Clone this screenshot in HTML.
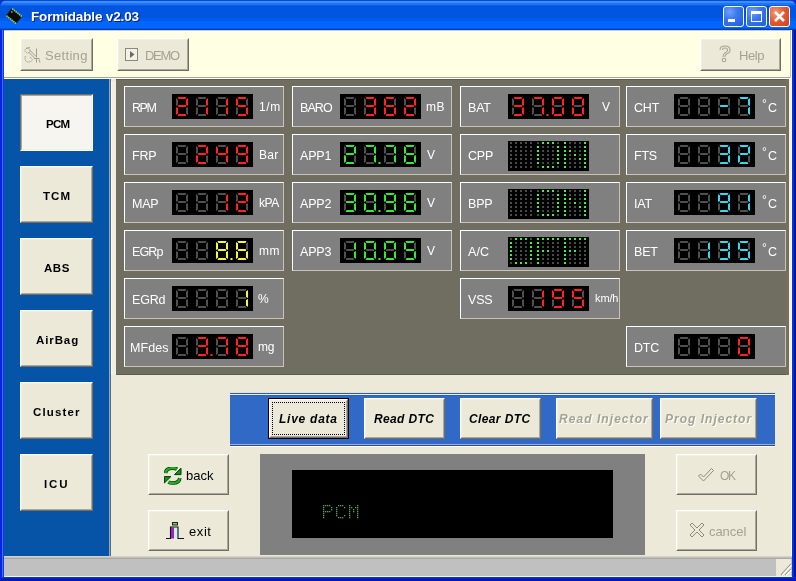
<!DOCTYPE html><html><head><meta charset="utf-8"><style>html,body{margin:0;padding:0;width:796px;height:581px;overflow:hidden;background:#0831D9}body{position:relative;font-family:"Liberation Sans", sans-serif}div,svg{position:absolute}.t{will-change:transform}</style></head><body>
<div style="position:absolute;left:0px;top:0px;width:796px;height:581px;background:#0A2CC8"></div>
<div style="position:absolute;left:0px;top:0px;width:796px;height:30px;background:linear-gradient(to bottom,#0A48D8 0px,#0A48D8 1px,#3B8EFF 1px,#3B8EFF 3px,#1E74F5 3px,#1E74F5 5px,#0A5FE5 5px,#0A5FE5 6px,#0055E0 6px,#0055E0 18px,#005CEB 18px,#005CEB 21px,#0066FF 21px,#0066FF 28px,#0056E0 28px,#0056E0 29px,#0040B0 29px,#0040B0 30px);border-radius:7px 7px 0 0"></div>
<div style="position:absolute;left:0px;top:30px;width:4px;height:551px;background:linear-gradient(to right,#0A24E0 0,#0A24E0 2px,#3A72FF 2px,#3A72FF 3px,#0A40E0 3px)"></div>
<div style="position:absolute;left:792px;top:30px;width:4px;height:551px;background:linear-gradient(to right,#0035E0 0,#0035E0 2px,#00139F 2px)"></div>
<div style="position:absolute;left:0px;top:577px;width:796px;height:4px;background:linear-gradient(to bottom,#0A30E0 0,#0A30E0 1px,#0020C8 1px,#0018B0 4px)"></div>
<div style="position:absolute;left:4px;top:30px;width:788px;height:547px;background:#ECE9D8"></div>
<svg width="20" height="20" style="left:3.6px;top:5.5px" viewBox="0 0 20 20"><g transform="rotate(39 10 10)"><rect x="3.5" y="6" width="13" height="8" fill="#0C0C0C" stroke="#2A3A10" stroke-width="0.6"/><rect x="4" y="4.6" width="1.4" height="1.6" fill="#A8D040"/><rect x="4" y="13.8" width="1.4" height="1.6" fill="#A8D040"/><rect x="6.2" y="4.6" width="1.4" height="1.6" fill="#A8D040"/><rect x="6.2" y="13.8" width="1.4" height="1.6" fill="#A8D040"/><rect x="8.4" y="4.6" width="1.4" height="1.6" fill="#A8D040"/><rect x="8.4" y="13.8" width="1.4" height="1.6" fill="#A8D040"/><rect x="10.6" y="4.6" width="1.4" height="1.6" fill="#A8D040"/><rect x="10.6" y="13.8" width="1.4" height="1.6" fill="#A8D040"/><rect x="12.8" y="4.6" width="1.4" height="1.6" fill="#A8D040"/><rect x="12.8" y="13.8" width="1.4" height="1.6" fill="#A8D040"/><rect x="15" y="4.6" width="1.4" height="1.6" fill="#A8D040"/><rect x="15" y="13.8" width="1.4" height="1.6" fill="#A8D040"/><circle cx="5.8" cy="8.2" r="1" fill="#8A8070"/></g></svg>
<div class="t" style="position:absolute;left:31px;top:10px;white-space:nowrap;font-size:13.5px;line-height:13.5px;color:#fff;letter-spacing:-0.150px;font-weight:bold;text-shadow:1px 1px 0 #0A1F7A">Formidable v2.03</div>
<div style="left:723px;top:6px;width:21px;height:21px;box-sizing:border-box;border:1px solid #fff;border-radius:3px;background:radial-gradient(circle at 30% 25%,#6FA0FF 0,#3A78F0 40%,#2458D8 100%)">
<div style="left:4px;top:12px;width:7px;height:3px;background:#fff"></div>
</div>
<div style="left:746px;top:6px;width:21px;height:21px;box-sizing:border-box;border:1px solid #fff;border-radius:3px;background:radial-gradient(circle at 30% 25%,#6FA0FF 0,#3A78F0 40%,#2458D8 100%)">
<div style="left:4px;top:4px;width:11px;height:11px;box-sizing:border-box;border:1px solid #fff;border-top:3px solid #fff"></div>
</div>
<div style="left:769px;top:6px;width:21px;height:21px;box-sizing:border-box;border:1px solid #fff;border-radius:3px;background:radial-gradient(circle at 30% 30%,#F39C78 0,#E55B34 45%,#C9401A 100%)">
<svg width="19" height="19" style="left:0;top:0"><path d="M5 5 L14 14 M14 5 L5 14" stroke="#fff" stroke-width="2.6"/></svg>
</div>
<div style="position:absolute;left:4px;top:30px;width:788px;height:47px;background:#FFFFE3"></div>
<div style="position:absolute;left:4px;top:30px;width:788px;height:1px;background:#C8C8D8"></div>
<div style="position:absolute;left:4px;top:31px;width:788px;height:1px;background:#FFFFFF"></div>
<div style="position:absolute;left:4px;top:77px;width:788px;height:1px;background:#A8A490"></div>
<div style="position:absolute;left:4px;top:78px;width:788px;height:1px;background:#FFFFFF"></div>
<div style="position:absolute;left:20px;top:38px;width:73px;height:33px;background:#ECE9D8"></div>
<div style="position:absolute;left:20px;top:38px;width:71px;height:31px;border-style:solid;border-width:1px;border-color:#FFFFFF #716F64 #716F64 #FFFFFF"></div>
<div style="position:absolute;left:21px;top:39px;width:69px;height:29px;border-style:solid;border-width:1px;border-color:#F1EFE2 #ACA899 #ACA899 #F1EFE2"></div>
<div class="t" style="position:absolute;left:45px;top:49px;white-space:nowrap;font-size:13px;line-height:13px;color:#A5A293;letter-spacing:0.317px;">Setting</div>
<svg width="18" height="17" style="left:24px;top:47px"><g fill="none" stroke="#A09D8E" stroke-width="1"><circle cx="3.5" cy="3.5" r="2.5" stroke-dasharray="1.2 0.8"/><path d="M2 1.5 L6 0.5"/><path d="M4.5 5 L11 11.5 M6 3.5 L12 9.5"/><path d="M12.5 1.5 L12.5 10.5"/><path d="M10 11.5 L15.5 11.5 M12.5 11.5 L12.5 15.5 M15 12.5 L16 15.5"/><path d="M1.5 9 Q0 13.5 3.5 15 Q6 15.5 8.5 13 M6 10 L9 13" stroke-dasharray="1.4 0.6"/></g></svg>
<div style="position:absolute;left:117px;top:38px;width:72px;height:33px;background:#ECE9D8"></div>
<div style="position:absolute;left:117px;top:38px;width:70px;height:31px;border-style:solid;border-width:1px;border-color:#FFFFFF #716F64 #716F64 #FFFFFF"></div>
<div style="position:absolute;left:118px;top:39px;width:68px;height:29px;border-style:solid;border-width:1px;border-color:#F1EFE2 #ACA899 #ACA899 #F1EFE2"></div>
<div class="t" style="position:absolute;left:145px;top:49px;white-space:nowrap;font-size:13px;line-height:13px;color:#A5A293;letter-spacing:-1.267px;">DEMO</div>
<div style="left:125px;top:48px;width:11px;height:11px;border:1px solid #8A8878;background:#F4F2E8"></div>
<svg width="6" height="8" style="left:130px;top:51px"><path d="M0 0 L4.5 3.5 L0 7Z" fill="#6E6C60"/></svg>
<div style="position:absolute;left:700px;top:38px;width:81px;height:33px;background:#ECE9D8"></div>
<div style="position:absolute;left:700px;top:38px;width:79px;height:31px;border-style:solid;border-width:1px;border-color:#FFFFFF #716F64 #716F64 #FFFFFF"></div>
<div style="position:absolute;left:701px;top:39px;width:77px;height:29px;border-style:solid;border-width:1px;border-color:#F1EFE2 #ACA899 #ACA899 #F1EFE2"></div>
<div class="t" style="position:absolute;left:739px;top:49px;white-space:nowrap;font-size:13px;line-height:13px;color:#A5A293;letter-spacing:-0.383px;">Help</div>
<svg width="14" height="18" style="left:718px;top:45px"><g fill="none" stroke="#A8A494" stroke-width="1.1"><path d="M2 5 Q2 1 7 1 Q12 1 12 5 Q12 8 8.5 9 Q7 10 7 12 M4.5 5 Q4.5 3 7 3 Q9.5 3 9.5 5 Q9.5 7 7 8 Q5 9 5 12"/><circle cx="6" cy="15" r="1.8"/></g></svg>
<div style="position:absolute;left:4px;top:79px;width:105px;height:477px;background:#0654A8"></div>
<div style="position:absolute;left:109px;top:79px;width:1px;height:477px;background:#8FA8CC"></div>
<div style="position:absolute;left:110px;top:79px;width:1px;height:477px;background:#5F6A70"></div>
<div style="position:absolute;left:111px;top:81px;width:5px;height:294px;background:#F2EFE2"></div>
<div style="position:absolute;left:111px;top:81px;width:1px;height:294px;background:#FAF9F0"></div>
<div style="position:absolute;left:20px;top:94px;width:73px;height:57px;background:#F6F5EF"></div>
<div style="position:absolute;left:20px;top:94px;width:71px;height:55px;border-style:solid;border-width:1px;border-color:#716F64 #FFFFFF #FFFFFF #716F64"></div>
<div style="position:absolute;left:21px;top:95px;width:69px;height:53px;border-style:solid;border-width:1px;border-color:#ACA899 #F1EFE2 #F1EFE2 #ACA899"></div>
<div class="t" style="position:absolute;left:46px;top:119px;white-space:nowrap;font-size:11.5px;line-height:11.5px;color:#000;letter-spacing:-0.750px;font-weight:bold;">PCM</div>
<div style="position:absolute;left:20px;top:166px;width:73px;height:57px;background:#ECE9D8"></div>
<div style="position:absolute;left:20px;top:166px;width:71px;height:55px;border-style:solid;border-width:1px;border-color:#FFFFFF #716F64 #716F64 #FFFFFF"></div>
<div style="position:absolute;left:21px;top:167px;width:69px;height:53px;border-style:solid;border-width:1px;border-color:#F1EFE2 #ACA899 #ACA899 #F1EFE2"></div>
<div class="t" style="position:absolute;left:43px;top:191px;white-space:nowrap;font-size:11.5px;line-height:11.5px;color:#000;letter-spacing:1.100px;font-weight:bold;">TCM</div>
<div style="position:absolute;left:20px;top:238px;width:73px;height:57px;background:#ECE9D8"></div>
<div style="position:absolute;left:20px;top:238px;width:71px;height:55px;border-style:solid;border-width:1px;border-color:#FFFFFF #716F64 #716F64 #FFFFFF"></div>
<div style="position:absolute;left:21px;top:239px;width:69px;height:53px;border-style:solid;border-width:1px;border-color:#F1EFE2 #ACA899 #ACA899 #F1EFE2"></div>
<div class="t" style="position:absolute;left:44px;top:263px;white-space:nowrap;font-size:11.5px;line-height:11.5px;color:#000;letter-spacing:0.525px;font-weight:bold;">ABS</div>
<div style="position:absolute;left:20px;top:310px;width:73px;height:57px;background:#ECE9D8"></div>
<div style="position:absolute;left:20px;top:310px;width:71px;height:55px;border-style:solid;border-width:1px;border-color:#FFFFFF #716F64 #716F64 #FFFFFF"></div>
<div style="position:absolute;left:21px;top:311px;width:69px;height:53px;border-style:solid;border-width:1px;border-color:#F1EFE2 #ACA899 #ACA899 #F1EFE2"></div>
<div class="t" style="position:absolute;left:36px;top:335px;white-space:nowrap;font-size:11.5px;line-height:11.5px;color:#000;letter-spacing:0.890px;font-weight:bold;">AirBag</div>
<div style="position:absolute;left:20px;top:382px;width:73px;height:57px;background:#ECE9D8"></div>
<div style="position:absolute;left:20px;top:382px;width:71px;height:55px;border-style:solid;border-width:1px;border-color:#FFFFFF #716F64 #716F64 #FFFFFF"></div>
<div style="position:absolute;left:21px;top:383px;width:69px;height:53px;border-style:solid;border-width:1px;border-color:#F1EFE2 #ACA899 #ACA899 #F1EFE2"></div>
<div class="t" style="position:absolute;left:33px;top:407px;white-space:nowrap;font-size:11.5px;line-height:11.5px;color:#000;letter-spacing:1.142px;font-weight:bold;">Cluster</div>
<div style="position:absolute;left:20px;top:454px;width:73px;height:57px;background:#ECE9D8"></div>
<div style="position:absolute;left:20px;top:454px;width:71px;height:55px;border-style:solid;border-width:1px;border-color:#FFFFFF #716F64 #716F64 #FFFFFF"></div>
<div style="position:absolute;left:21px;top:455px;width:69px;height:53px;border-style:solid;border-width:1px;border-color:#F1EFE2 #ACA899 #ACA899 #F1EFE2"></div>
<div class="t" style="position:absolute;left:44px;top:479px;white-space:nowrap;font-size:11.5px;line-height:11.5px;color:#000;letter-spacing:1.825px;font-weight:bold;">ICU</div>
<div style="position:absolute;left:116px;top:79px;width:673px;height:296px;background:#706D61"></div>
<div style="position:absolute;left:116px;top:79px;width:673px;height:1px;background:#5E5A4E"></div>
<div style="position:absolute;left:116px;top:374px;width:673px;height:1px;background:#5E5A4E"></div>
<div style="position:absolute;left:786px;top:79px;width:3px;height:296px;background:#786F5C"></div>
<div style="position:absolute;left:789px;top:79px;width:3px;height:296px;background:#F4F2EA"></div>
<div style="position:absolute;left:790px;top:30px;width:1px;height:48px;background:#C8C4B0"></div>
<div style="position:absolute;left:791px;top:30px;width:1px;height:526px;background:#FFFFFF"></div>
<div style="left:124px;top:86px;width:158px;height:39px;background:#808080;border-style:solid;border-width:1px;border-color:#fff #C8C4B8 #C8C4B8 #fff"></div>
<div class="t" style="position:absolute;left:132px;top:102px;white-space:nowrap;font-size:12.5px;line-height:12.5px;color:#fff;letter-spacing:-1.475px;">RPM</div>
<div style="position:absolute;left:172px;top:94px;width:81px;height:25px;background:#000"><svg width="82" height="25" style="position:absolute;left:0;top:0"><polygon points="5.5,3.0 14.5,3.0 13.5,5.0 6.5,5.0" fill="#FF2424"/><polygon points="16.0,4.0 16.0,12.0 14.0,11.0 14.0,5.5" fill="#FF2424"/><polygon points="16.0,13.0 16.0,21.0 14.0,19.5 14.0,14.0" fill="#505050"/><polygon points="5.5,22.0 14.5,22.0 13.5,20.0 6.5,20.0" fill="#FF2424"/><polygon points="4.0,13.0 4.0,21.0 6.0,19.5 6.0,14.0" fill="#FF2424"/><polygon points="4.0,4.0 4.0,12.0 6.0,11.0 6.0,5.5" fill="#505050"/><polygon points="5.5,12.0 6.5,11.0 13.5,11.0 14.5,12.0 13.5,13.0 6.5,13.0" fill="#FF2424"/><polygon points="25.5,3.0 34.5,3.0 33.5,5.0 26.5,5.0" fill="#505050"/><polygon points="36.0,4.0 36.0,12.0 34.0,11.0 34.0,5.5" fill="#FF2424"/><polygon points="36.0,13.0 36.0,21.0 34.0,19.5 34.0,14.0" fill="#FF2424"/><polygon points="25.5,22.0 34.5,22.0 33.5,20.0 26.5,20.0" fill="#505050"/><polygon points="24.0,13.0 24.0,21.0 26.0,19.5 26.0,14.0" fill="#505050"/><polygon points="24.0,4.0 24.0,12.0 26.0,11.0 26.0,5.5" fill="#505050"/><polygon points="25.5,12.0 26.5,11.0 33.5,11.0 34.5,12.0 33.5,13.0 26.5,13.0" fill="#505050"/><polygon points="45.5,3.0 54.5,3.0 53.5,5.0 46.5,5.0" fill="#505050"/><polygon points="56.0,4.0 56.0,12.0 54.0,11.0 54.0,5.5" fill="#FF2424"/><polygon points="56.0,13.0 56.0,21.0 54.0,19.5 54.0,14.0" fill="#FF2424"/><polygon points="45.5,22.0 54.5,22.0 53.5,20.0 46.5,20.0" fill="#505050"/><polygon points="44.0,13.0 44.0,21.0 46.0,19.5 46.0,14.0" fill="#505050"/><polygon points="44.0,4.0 44.0,12.0 46.0,11.0 46.0,5.5" fill="#505050"/><polygon points="45.5,12.0 46.5,11.0 53.5,11.0 54.5,12.0 53.5,13.0 46.5,13.0" fill="#505050"/><polygon points="65.5,3.0 74.5,3.0 73.5,5.0 66.5,5.0" fill="#FF2424"/><polygon points="76.0,4.0 76.0,12.0 74.0,11.0 74.0,5.5" fill="#505050"/><polygon points="76.0,13.0 76.0,21.0 74.0,19.5 74.0,14.0" fill="#FF2424"/><polygon points="65.5,22.0 74.5,22.0 73.5,20.0 66.5,20.0" fill="#FF2424"/><polygon points="64.0,13.0 64.0,21.0 66.0,19.5 66.0,14.0" fill="#505050"/><polygon points="64.0,4.0 64.0,12.0 66.0,11.0 66.0,5.5" fill="#FF2424"/><polygon points="65.5,12.0 66.5,11.0 73.5,11.0 74.5,12.0 73.5,13.0 66.5,13.0" fill="#FF2424"/></svg></div>
<div class="t" style="position:absolute;left:259px;top:101px;white-space:nowrap;font-size:12px;line-height:12px;color:#fff;letter-spacing:0.650px;">1/m</div>
<div style="left:124px;top:134px;width:158px;height:39px;background:#808080;border-style:solid;border-width:1px;border-color:#fff #C8C4B8 #C8C4B8 #fff"></div>
<div class="t" style="position:absolute;left:132px;top:150px;white-space:nowrap;font-size:12.5px;line-height:12.5px;color:#fff;letter-spacing:-0.200px;">FRP</div>
<div style="position:absolute;left:172px;top:142px;width:81px;height:25px;background:#000"><svg width="82" height="25" style="position:absolute;left:0;top:0"><polygon points="5.5,3.0 14.5,3.0 13.5,5.0 6.5,5.0" fill="#505050"/><polygon points="16.0,4.0 16.0,12.0 14.0,11.0 14.0,5.5" fill="#505050"/><polygon points="16.0,13.0 16.0,21.0 14.0,19.5 14.0,14.0" fill="#505050"/><polygon points="5.5,22.0 14.5,22.0 13.5,20.0 6.5,20.0" fill="#505050"/><polygon points="4.0,13.0 4.0,21.0 6.0,19.5 6.0,14.0" fill="#505050"/><polygon points="4.0,4.0 4.0,12.0 6.0,11.0 6.0,5.5" fill="#505050"/><polygon points="5.5,12.0 6.5,11.0 13.5,11.0 14.5,12.0 13.5,13.0 6.5,13.0" fill="#505050"/><polygon points="25.5,3.0 34.5,3.0 33.5,5.0 26.5,5.0" fill="#FF2424"/><polygon points="36.0,4.0 36.0,12.0 34.0,11.0 34.0,5.5" fill="#FF2424"/><polygon points="36.0,13.0 36.0,21.0 34.0,19.5 34.0,14.0" fill="#505050"/><polygon points="25.5,22.0 34.5,22.0 33.5,20.0 26.5,20.0" fill="#FF2424"/><polygon points="24.0,13.0 24.0,21.0 26.0,19.5 26.0,14.0" fill="#FF2424"/><polygon points="24.0,4.0 24.0,12.0 26.0,11.0 26.0,5.5" fill="#505050"/><polygon points="25.5,12.0 26.5,11.0 33.5,11.0 34.5,12.0 33.5,13.0 26.5,13.0" fill="#FF2424"/><polygon points="45.5,3.0 54.5,3.0 53.5,5.0 46.5,5.0" fill="#505050"/><polygon points="56.0,4.0 56.0,12.0 54.0,11.0 54.0,5.5" fill="#FF2424"/><polygon points="56.0,13.0 56.0,21.0 54.0,19.5 54.0,14.0" fill="#FF2424"/><polygon points="45.5,22.0 54.5,22.0 53.5,20.0 46.5,20.0" fill="#505050"/><polygon points="44.0,13.0 44.0,21.0 46.0,19.5 46.0,14.0" fill="#505050"/><polygon points="44.0,4.0 44.0,12.0 46.0,11.0 46.0,5.5" fill="#FF2424"/><polygon points="45.5,12.0 46.5,11.0 53.5,11.0 54.5,12.0 53.5,13.0 46.5,13.0" fill="#FF2424"/><polygon points="65.5,3.0 74.5,3.0 73.5,5.0 66.5,5.0" fill="#FF2424"/><polygon points="76.0,4.0 76.0,12.0 74.0,11.0 74.0,5.5" fill="#FF2424"/><polygon points="76.0,13.0 76.0,21.0 74.0,19.5 74.0,14.0" fill="#FF2424"/><polygon points="65.5,22.0 74.5,22.0 73.5,20.0 66.5,20.0" fill="#FF2424"/><polygon points="64.0,13.0 64.0,21.0 66.0,19.5 66.0,14.0" fill="#505050"/><polygon points="64.0,4.0 64.0,12.0 66.0,11.0 66.0,5.5" fill="#FF2424"/><polygon points="65.5,12.0 66.5,11.0 73.5,11.0 74.5,12.0 73.5,13.0 66.5,13.0" fill="#FF2424"/></svg></div>
<div class="t" style="position:absolute;left:259px;top:149px;white-space:nowrap;font-size:12px;line-height:12px;color:#fff;letter-spacing:0.225px;">Bar</div>
<div style="left:124px;top:182px;width:158px;height:39px;background:#808080;border-style:solid;border-width:1px;border-color:#fff #C8C4B8 #C8C4B8 #fff"></div>
<div class="t" style="position:absolute;left:132px;top:198px;white-space:nowrap;font-size:12.5px;line-height:12.5px;color:#fff;letter-spacing:-0.200px;">MAP</div>
<div style="position:absolute;left:172px;top:190px;width:81px;height:25px;background:#000"><svg width="82" height="25" style="position:absolute;left:0;top:0"><polygon points="5.5,3.0 14.5,3.0 13.5,5.0 6.5,5.0" fill="#505050"/><polygon points="16.0,4.0 16.0,12.0 14.0,11.0 14.0,5.5" fill="#505050"/><polygon points="16.0,13.0 16.0,21.0 14.0,19.5 14.0,14.0" fill="#505050"/><polygon points="5.5,22.0 14.5,22.0 13.5,20.0 6.5,20.0" fill="#505050"/><polygon points="4.0,13.0 4.0,21.0 6.0,19.5 6.0,14.0" fill="#505050"/><polygon points="4.0,4.0 4.0,12.0 6.0,11.0 6.0,5.5" fill="#505050"/><polygon points="5.5,12.0 6.5,11.0 13.5,11.0 14.5,12.0 13.5,13.0 6.5,13.0" fill="#505050"/><polygon points="25.5,3.0 34.5,3.0 33.5,5.0 26.5,5.0" fill="#505050"/><polygon points="36.0,4.0 36.0,12.0 34.0,11.0 34.0,5.5" fill="#505050"/><polygon points="36.0,13.0 36.0,21.0 34.0,19.5 34.0,14.0" fill="#505050"/><polygon points="25.5,22.0 34.5,22.0 33.5,20.0 26.5,20.0" fill="#505050"/><polygon points="24.0,13.0 24.0,21.0 26.0,19.5 26.0,14.0" fill="#505050"/><polygon points="24.0,4.0 24.0,12.0 26.0,11.0 26.0,5.5" fill="#505050"/><polygon points="25.5,12.0 26.5,11.0 33.5,11.0 34.5,12.0 33.5,13.0 26.5,13.0" fill="#505050"/><polygon points="45.5,3.0 54.5,3.0 53.5,5.0 46.5,5.0" fill="#505050"/><polygon points="56.0,4.0 56.0,12.0 54.0,11.0 54.0,5.5" fill="#FF2424"/><polygon points="56.0,13.0 56.0,21.0 54.0,19.5 54.0,14.0" fill="#FF2424"/><polygon points="45.5,22.0 54.5,22.0 53.5,20.0 46.5,20.0" fill="#505050"/><polygon points="44.0,13.0 44.0,21.0 46.0,19.5 46.0,14.0" fill="#505050"/><polygon points="44.0,4.0 44.0,12.0 46.0,11.0 46.0,5.5" fill="#505050"/><polygon points="45.5,12.0 46.5,11.0 53.5,11.0 54.5,12.0 53.5,13.0 46.5,13.0" fill="#505050"/><polygon points="65.5,3.0 74.5,3.0 73.5,5.0 66.5,5.0" fill="#FF2424"/><polygon points="76.0,4.0 76.0,12.0 74.0,11.0 74.0,5.5" fill="#FF2424"/><polygon points="76.0,13.0 76.0,21.0 74.0,19.5 74.0,14.0" fill="#505050"/><polygon points="65.5,22.0 74.5,22.0 73.5,20.0 66.5,20.0" fill="#FF2424"/><polygon points="64.0,13.0 64.0,21.0 66.0,19.5 66.0,14.0" fill="#FF2424"/><polygon points="64.0,4.0 64.0,12.0 66.0,11.0 66.0,5.5" fill="#505050"/><polygon points="65.5,12.0 66.5,11.0 73.5,11.0 74.5,12.0 73.5,13.0 66.5,13.0" fill="#FF2424"/></svg></div>
<div class="t" style="position:absolute;left:259px;top:197px;white-space:nowrap;font-size:12px;line-height:12px;color:#fff;letter-spacing:-0.400px;">kPA</div>
<div style="left:124px;top:230px;width:158px;height:39px;background:#808080;border-style:solid;border-width:1px;border-color:#fff #C8C4B8 #C8C4B8 #fff"></div>
<div class="t" style="position:absolute;left:132px;top:246px;white-space:nowrap;font-size:12.5px;line-height:12.5px;color:#fff;letter-spacing:-0.867px;">EGRp</div>
<div style="position:absolute;left:172px;top:238px;width:81px;height:25px;background:#000"><svg width="82" height="25" style="position:absolute;left:0;top:0"><polygon points="5.5,3.0 14.5,3.0 13.5,5.0 6.5,5.0" fill="#505050"/><polygon points="16.0,4.0 16.0,12.0 14.0,11.0 14.0,5.5" fill="#505050"/><polygon points="16.0,13.0 16.0,21.0 14.0,19.5 14.0,14.0" fill="#505050"/><polygon points="5.5,22.0 14.5,22.0 13.5,20.0 6.5,20.0" fill="#505050"/><polygon points="4.0,13.0 4.0,21.0 6.0,19.5 6.0,14.0" fill="#505050"/><polygon points="4.0,4.0 4.0,12.0 6.0,11.0 6.0,5.5" fill="#505050"/><polygon points="5.5,12.0 6.5,11.0 13.5,11.0 14.5,12.0 13.5,13.0 6.5,13.0" fill="#505050"/><polygon points="25.5,3.0 34.5,3.0 33.5,5.0 26.5,5.0" fill="#505050"/><polygon points="36.0,4.0 36.0,12.0 34.0,11.0 34.0,5.5" fill="#505050"/><polygon points="36.0,13.0 36.0,21.0 34.0,19.5 34.0,14.0" fill="#505050"/><polygon points="25.5,22.0 34.5,22.0 33.5,20.0 26.5,20.0" fill="#505050"/><polygon points="24.0,13.0 24.0,21.0 26.0,19.5 26.0,14.0" fill="#505050"/><polygon points="24.0,4.0 24.0,12.0 26.0,11.0 26.0,5.5" fill="#505050"/><polygon points="25.5,12.0 26.5,11.0 33.5,11.0 34.5,12.0 33.5,13.0 26.5,13.0" fill="#505050"/><polygon points="45.5,3.0 54.5,3.0 53.5,5.0 46.5,5.0" fill="#F8F838"/><polygon points="56.0,4.0 56.0,12.0 54.0,11.0 54.0,5.5" fill="#F8F838"/><polygon points="56.0,13.0 56.0,21.0 54.0,19.5 54.0,14.0" fill="#F8F838"/><polygon points="45.5,22.0 54.5,22.0 53.5,20.0 46.5,20.0" fill="#F8F838"/><polygon points="44.0,13.0 44.0,21.0 46.0,19.5 46.0,14.0" fill="#F8F838"/><polygon points="44.0,4.0 44.0,12.0 46.0,11.0 46.0,5.5" fill="#F8F838"/><polygon points="45.5,12.0 46.5,11.0 53.5,11.0 54.5,12.0 53.5,13.0 46.5,13.0" fill="#F8F838"/><polygon points="65.5,3.0 74.5,3.0 73.5,5.0 66.5,5.0" fill="#F8F838"/><polygon points="76.0,4.0 76.0,12.0 74.0,11.0 74.0,5.5" fill="#505050"/><polygon points="76.0,13.0 76.0,21.0 74.0,19.5 74.0,14.0" fill="#F8F838"/><polygon points="65.5,22.0 74.5,22.0 73.5,20.0 66.5,20.0" fill="#F8F838"/><polygon points="64.0,13.0 64.0,21.0 66.0,19.5 66.0,14.0" fill="#F8F838"/><polygon points="64.0,4.0 64.0,12.0 66.0,11.0 66.0,5.5" fill="#F8F838"/><polygon points="65.5,12.0 66.5,11.0 73.5,11.0 74.5,12.0 73.5,13.0 66.5,13.0" fill="#F8F838"/><rect x="58.5" y="20" width="2" height="2" fill="#F8F838"/></svg></div>
<div class="t" style="position:absolute;left:259px;top:245px;white-space:nowrap;font-size:12px;line-height:12px;color:#fff;letter-spacing:0.400px;">mm</div>
<div style="left:124px;top:278px;width:158px;height:39px;background:#808080;border-style:solid;border-width:1px;border-color:#fff #C8C4B8 #C8C4B8 #fff"></div>
<div class="t" style="position:absolute;left:132px;top:294px;white-space:nowrap;font-size:12.5px;line-height:12.5px;color:#fff;letter-spacing:-0.200px;">EGRd</div>
<div style="position:absolute;left:172px;top:286px;width:81px;height:25px;background:#000"><svg width="82" height="25" style="position:absolute;left:0;top:0"><polygon points="5.5,3.0 14.5,3.0 13.5,5.0 6.5,5.0" fill="#505050"/><polygon points="16.0,4.0 16.0,12.0 14.0,11.0 14.0,5.5" fill="#505050"/><polygon points="16.0,13.0 16.0,21.0 14.0,19.5 14.0,14.0" fill="#505050"/><polygon points="5.5,22.0 14.5,22.0 13.5,20.0 6.5,20.0" fill="#505050"/><polygon points="4.0,13.0 4.0,21.0 6.0,19.5 6.0,14.0" fill="#505050"/><polygon points="4.0,4.0 4.0,12.0 6.0,11.0 6.0,5.5" fill="#505050"/><polygon points="5.5,12.0 6.5,11.0 13.5,11.0 14.5,12.0 13.5,13.0 6.5,13.0" fill="#505050"/><polygon points="25.5,3.0 34.5,3.0 33.5,5.0 26.5,5.0" fill="#505050"/><polygon points="36.0,4.0 36.0,12.0 34.0,11.0 34.0,5.5" fill="#505050"/><polygon points="36.0,13.0 36.0,21.0 34.0,19.5 34.0,14.0" fill="#505050"/><polygon points="25.5,22.0 34.5,22.0 33.5,20.0 26.5,20.0" fill="#505050"/><polygon points="24.0,13.0 24.0,21.0 26.0,19.5 26.0,14.0" fill="#505050"/><polygon points="24.0,4.0 24.0,12.0 26.0,11.0 26.0,5.5" fill="#505050"/><polygon points="25.5,12.0 26.5,11.0 33.5,11.0 34.5,12.0 33.5,13.0 26.5,13.0" fill="#505050"/><polygon points="45.5,3.0 54.5,3.0 53.5,5.0 46.5,5.0" fill="#505050"/><polygon points="56.0,4.0 56.0,12.0 54.0,11.0 54.0,5.5" fill="#505050"/><polygon points="56.0,13.0 56.0,21.0 54.0,19.5 54.0,14.0" fill="#505050"/><polygon points="45.5,22.0 54.5,22.0 53.5,20.0 46.5,20.0" fill="#505050"/><polygon points="44.0,13.0 44.0,21.0 46.0,19.5 46.0,14.0" fill="#505050"/><polygon points="44.0,4.0 44.0,12.0 46.0,11.0 46.0,5.5" fill="#505050"/><polygon points="45.5,12.0 46.5,11.0 53.5,11.0 54.5,12.0 53.5,13.0 46.5,13.0" fill="#505050"/><polygon points="65.5,3.0 74.5,3.0 73.5,5.0 66.5,5.0" fill="#505050"/><polygon points="76.0,4.0 76.0,12.0 74.0,11.0 74.0,5.5" fill="#F8F838"/><polygon points="76.0,13.0 76.0,21.0 74.0,19.5 74.0,14.0" fill="#F8F838"/><polygon points="65.5,22.0 74.5,22.0 73.5,20.0 66.5,20.0" fill="#505050"/><polygon points="64.0,13.0 64.0,21.0 66.0,19.5 66.0,14.0" fill="#505050"/><polygon points="64.0,4.0 64.0,12.0 66.0,11.0 66.0,5.5" fill="#505050"/><polygon points="65.5,12.0 66.5,11.0 73.5,11.0 74.5,12.0 73.5,13.0 66.5,13.0" fill="#505050"/></svg></div>
<div class="t" style="position:absolute;left:258px;top:293px;white-space:nowrap;font-size:12px;line-height:12px;color:#fff;letter-spacing:0.000px;">%</div>
<div style="left:124px;top:326px;width:158px;height:39px;background:#808080;border-style:solid;border-width:1px;border-color:#fff #C8C4B8 #C8C4B8 #fff"></div>
<div class="t" style="position:absolute;left:130px;top:342px;white-space:nowrap;font-size:12.5px;line-height:12.5px;color:#fff;letter-spacing:0.087px;">MFdes</div>
<div style="position:absolute;left:172px;top:334px;width:81px;height:25px;background:#000"><svg width="82" height="25" style="position:absolute;left:0;top:0"><polygon points="5.5,3.0 14.5,3.0 13.5,5.0 6.5,5.0" fill="#505050"/><polygon points="16.0,4.0 16.0,12.0 14.0,11.0 14.0,5.5" fill="#505050"/><polygon points="16.0,13.0 16.0,21.0 14.0,19.5 14.0,14.0" fill="#505050"/><polygon points="5.5,22.0 14.5,22.0 13.5,20.0 6.5,20.0" fill="#505050"/><polygon points="4.0,13.0 4.0,21.0 6.0,19.5 6.0,14.0" fill="#505050"/><polygon points="4.0,4.0 4.0,12.0 6.0,11.0 6.0,5.5" fill="#505050"/><polygon points="5.5,12.0 6.5,11.0 13.5,11.0 14.5,12.0 13.5,13.0 6.5,13.0" fill="#505050"/><polygon points="25.5,3.0 34.5,3.0 33.5,5.0 26.5,5.0" fill="#FF2424"/><polygon points="36.0,4.0 36.0,12.0 34.0,11.0 34.0,5.5" fill="#FF2424"/><polygon points="36.0,13.0 36.0,21.0 34.0,19.5 34.0,14.0" fill="#FF2424"/><polygon points="25.5,22.0 34.5,22.0 33.5,20.0 26.5,20.0" fill="#FF2424"/><polygon points="24.0,13.0 24.0,21.0 26.0,19.5 26.0,14.0" fill="#505050"/><polygon points="24.0,4.0 24.0,12.0 26.0,11.0 26.0,5.5" fill="#505050"/><polygon points="25.5,12.0 26.5,11.0 33.5,11.0 34.5,12.0 33.5,13.0 26.5,13.0" fill="#FF2424"/><polygon points="45.5,3.0 54.5,3.0 53.5,5.0 46.5,5.0" fill="#FF2424"/><polygon points="56.0,4.0 56.0,12.0 54.0,11.0 54.0,5.5" fill="#FF2424"/><polygon points="56.0,13.0 56.0,21.0 54.0,19.5 54.0,14.0" fill="#FF2424"/><polygon points="45.5,22.0 54.5,22.0 53.5,20.0 46.5,20.0" fill="#505050"/><polygon points="44.0,13.0 44.0,21.0 46.0,19.5 46.0,14.0" fill="#505050"/><polygon points="44.0,4.0 44.0,12.0 46.0,11.0 46.0,5.5" fill="#505050"/><polygon points="45.5,12.0 46.5,11.0 53.5,11.0 54.5,12.0 53.5,13.0 46.5,13.0" fill="#505050"/><polygon points="65.5,3.0 74.5,3.0 73.5,5.0 66.5,5.0" fill="#FF2424"/><polygon points="76.0,4.0 76.0,12.0 74.0,11.0 74.0,5.5" fill="#FF2424"/><polygon points="76.0,13.0 76.0,21.0 74.0,19.5 74.0,14.0" fill="#FF2424"/><polygon points="65.5,22.0 74.5,22.0 73.5,20.0 66.5,20.0" fill="#FF2424"/><polygon points="64.0,13.0 64.0,21.0 66.0,19.5 66.0,14.0" fill="#FF2424"/><polygon points="64.0,4.0 64.0,12.0 66.0,11.0 66.0,5.5" fill="#FF2424"/><polygon points="65.5,12.0 66.5,11.0 73.5,11.0 74.5,12.0 73.5,13.0 66.5,13.0" fill="#FF2424"/><rect x="38.5" y="20" width="2" height="2" fill="#FF2424"/></svg></div>
<div class="t" style="position:absolute;left:258px;top:341px;white-space:nowrap;font-size:12px;line-height:12px;color:#fff;letter-spacing:-0.150px;">mg</div>
<div style="left:292px;top:86px;width:158px;height:39px;background:#808080;border-style:solid;border-width:1px;border-color:#fff #C8C4B8 #C8C4B8 #fff"></div>
<div class="t" style="position:absolute;left:300px;top:102px;white-space:nowrap;font-size:12.5px;line-height:12.5px;color:#fff;letter-spacing:-0.933px;">BARO</div>
<div style="position:absolute;left:340px;top:94px;width:81px;height:25px;background:#000"><svg width="82" height="25" style="position:absolute;left:0;top:0"><polygon points="5.5,3.0 14.5,3.0 13.5,5.0 6.5,5.0" fill="#505050"/><polygon points="16.0,4.0 16.0,12.0 14.0,11.0 14.0,5.5" fill="#505050"/><polygon points="16.0,13.0 16.0,21.0 14.0,19.5 14.0,14.0" fill="#505050"/><polygon points="5.5,22.0 14.5,22.0 13.5,20.0 6.5,20.0" fill="#505050"/><polygon points="4.0,13.0 4.0,21.0 6.0,19.5 6.0,14.0" fill="#505050"/><polygon points="4.0,4.0 4.0,12.0 6.0,11.0 6.0,5.5" fill="#505050"/><polygon points="5.5,12.0 6.5,11.0 13.5,11.0 14.5,12.0 13.5,13.0 6.5,13.0" fill="#505050"/><polygon points="25.5,3.0 34.5,3.0 33.5,5.0 26.5,5.0" fill="#FF2424"/><polygon points="36.0,4.0 36.0,12.0 34.0,11.0 34.0,5.5" fill="#FF2424"/><polygon points="36.0,13.0 36.0,21.0 34.0,19.5 34.0,14.0" fill="#FF2424"/><polygon points="25.5,22.0 34.5,22.0 33.5,20.0 26.5,20.0" fill="#FF2424"/><polygon points="24.0,13.0 24.0,21.0 26.0,19.5 26.0,14.0" fill="#505050"/><polygon points="24.0,4.0 24.0,12.0 26.0,11.0 26.0,5.5" fill="#505050"/><polygon points="25.5,12.0 26.5,11.0 33.5,11.0 34.5,12.0 33.5,13.0 26.5,13.0" fill="#FF2424"/><polygon points="45.5,3.0 54.5,3.0 53.5,5.0 46.5,5.0" fill="#FF2424"/><polygon points="56.0,4.0 56.0,12.0 54.0,11.0 54.0,5.5" fill="#505050"/><polygon points="56.0,13.0 56.0,21.0 54.0,19.5 54.0,14.0" fill="#FF2424"/><polygon points="45.5,22.0 54.5,22.0 53.5,20.0 46.5,20.0" fill="#FF2424"/><polygon points="44.0,13.0 44.0,21.0 46.0,19.5 46.0,14.0" fill="#FF2424"/><polygon points="44.0,4.0 44.0,12.0 46.0,11.0 46.0,5.5" fill="#FF2424"/><polygon points="45.5,12.0 46.5,11.0 53.5,11.0 54.5,12.0 53.5,13.0 46.5,13.0" fill="#FF2424"/><polygon points="65.5,3.0 74.5,3.0 73.5,5.0 66.5,5.0" fill="#FF2424"/><polygon points="76.0,4.0 76.0,12.0 74.0,11.0 74.0,5.5" fill="#FF2424"/><polygon points="76.0,13.0 76.0,21.0 74.0,19.5 74.0,14.0" fill="#505050"/><polygon points="65.5,22.0 74.5,22.0 73.5,20.0 66.5,20.0" fill="#FF2424"/><polygon points="64.0,13.0 64.0,21.0 66.0,19.5 66.0,14.0" fill="#FF2424"/><polygon points="64.0,4.0 64.0,12.0 66.0,11.0 66.0,5.5" fill="#505050"/><polygon points="65.5,12.0 66.5,11.0 73.5,11.0 74.5,12.0 73.5,13.0 66.5,13.0" fill="#FF2424"/></svg></div>
<div class="t" style="position:absolute;left:426px;top:101px;white-space:nowrap;font-size:12px;line-height:12px;color:#fff;letter-spacing:0.400px;">mB</div>
<div style="left:292px;top:134px;width:158px;height:39px;background:#808080;border-style:solid;border-width:1px;border-color:#fff #C8C4B8 #C8C4B8 #fff"></div>
<div class="t" style="position:absolute;left:300px;top:150px;white-space:nowrap;font-size:12.5px;line-height:12.5px;color:#fff;letter-spacing:-0.200px;">APP1</div>
<div style="position:absolute;left:340px;top:142px;width:81px;height:25px;background:#000"><svg width="82" height="25" style="position:absolute;left:0;top:0"><polygon points="5.5,3.0 14.5,3.0 13.5,5.0 6.5,5.0" fill="#38E838"/><polygon points="16.0,4.0 16.0,12.0 14.0,11.0 14.0,5.5" fill="#38E838"/><polygon points="16.0,13.0 16.0,21.0 14.0,19.5 14.0,14.0" fill="#505050"/><polygon points="5.5,22.0 14.5,22.0 13.5,20.0 6.5,20.0" fill="#38E838"/><polygon points="4.0,13.0 4.0,21.0 6.0,19.5 6.0,14.0" fill="#38E838"/><polygon points="4.0,4.0 4.0,12.0 6.0,11.0 6.0,5.5" fill="#505050"/><polygon points="5.5,12.0 6.5,11.0 13.5,11.0 14.5,12.0 13.5,13.0 6.5,13.0" fill="#38E838"/><polygon points="25.5,3.0 34.5,3.0 33.5,5.0 26.5,5.0" fill="#38E838"/><polygon points="36.0,4.0 36.0,12.0 34.0,11.0 34.0,5.5" fill="#38E838"/><polygon points="36.0,13.0 36.0,21.0 34.0,19.5 34.0,14.0" fill="#38E838"/><polygon points="25.5,22.0 34.5,22.0 33.5,20.0 26.5,20.0" fill="#505050"/><polygon points="24.0,13.0 24.0,21.0 26.0,19.5 26.0,14.0" fill="#505050"/><polygon points="24.0,4.0 24.0,12.0 26.0,11.0 26.0,5.5" fill="#505050"/><polygon points="25.5,12.0 26.5,11.0 33.5,11.0 34.5,12.0 33.5,13.0 26.5,13.0" fill="#505050"/><polygon points="45.5,3.0 54.5,3.0 53.5,5.0 46.5,5.0" fill="#38E838"/><polygon points="56.0,4.0 56.0,12.0 54.0,11.0 54.0,5.5" fill="#38E838"/><polygon points="56.0,13.0 56.0,21.0 54.0,19.5 54.0,14.0" fill="#38E838"/><polygon points="45.5,22.0 54.5,22.0 53.5,20.0 46.5,20.0" fill="#505050"/><polygon points="44.0,13.0 44.0,21.0 46.0,19.5 46.0,14.0" fill="#505050"/><polygon points="44.0,4.0 44.0,12.0 46.0,11.0 46.0,5.5" fill="#505050"/><polygon points="45.5,12.0 46.5,11.0 53.5,11.0 54.5,12.0 53.5,13.0 46.5,13.0" fill="#505050"/><polygon points="65.5,3.0 74.5,3.0 73.5,5.0 66.5,5.0" fill="#38E838"/><polygon points="76.0,4.0 76.0,12.0 74.0,11.0 74.0,5.5" fill="#505050"/><polygon points="76.0,13.0 76.0,21.0 74.0,19.5 74.0,14.0" fill="#38E838"/><polygon points="65.5,22.0 74.5,22.0 73.5,20.0 66.5,20.0" fill="#38E838"/><polygon points="64.0,13.0 64.0,21.0 66.0,19.5 66.0,14.0" fill="#38E838"/><polygon points="64.0,4.0 64.0,12.0 66.0,11.0 66.0,5.5" fill="#38E838"/><polygon points="65.5,12.0 66.5,11.0 73.5,11.0 74.5,12.0 73.5,13.0 66.5,13.0" fill="#38E838"/><rect x="38.5" y="20" width="2" height="2" fill="#38E838"/></svg></div>
<div class="t" style="position:absolute;left:427px;top:149px;white-space:nowrap;font-size:12px;line-height:12px;color:#fff;letter-spacing:0.000px;">V</div>
<div style="left:292px;top:182px;width:158px;height:39px;background:#808080;border-style:solid;border-width:1px;border-color:#fff #C8C4B8 #C8C4B8 #fff"></div>
<div class="t" style="position:absolute;left:300px;top:198px;white-space:nowrap;font-size:12.5px;line-height:12.5px;color:#fff;letter-spacing:-0.200px;">APP2</div>
<div style="position:absolute;left:340px;top:190px;width:81px;height:25px;background:#000"><svg width="82" height="25" style="position:absolute;left:0;top:0"><polygon points="5.5,3.0 14.5,3.0 13.5,5.0 6.5,5.0" fill="#38E838"/><polygon points="16.0,4.0 16.0,12.0 14.0,11.0 14.0,5.5" fill="#38E838"/><polygon points="16.0,13.0 16.0,21.0 14.0,19.5 14.0,14.0" fill="#38E838"/><polygon points="5.5,22.0 14.5,22.0 13.5,20.0 6.5,20.0" fill="#38E838"/><polygon points="4.0,13.0 4.0,21.0 6.0,19.5 6.0,14.0" fill="#505050"/><polygon points="4.0,4.0 4.0,12.0 6.0,11.0 6.0,5.5" fill="#505050"/><polygon points="5.5,12.0 6.5,11.0 13.5,11.0 14.5,12.0 13.5,13.0 6.5,13.0" fill="#38E838"/><polygon points="25.5,3.0 34.5,3.0 33.5,5.0 26.5,5.0" fill="#38E838"/><polygon points="36.0,4.0 36.0,12.0 34.0,11.0 34.0,5.5" fill="#38E838"/><polygon points="36.0,13.0 36.0,21.0 34.0,19.5 34.0,14.0" fill="#38E838"/><polygon points="25.5,22.0 34.5,22.0 33.5,20.0 26.5,20.0" fill="#38E838"/><polygon points="24.0,13.0 24.0,21.0 26.0,19.5 26.0,14.0" fill="#38E838"/><polygon points="24.0,4.0 24.0,12.0 26.0,11.0 26.0,5.5" fill="#38E838"/><polygon points="25.5,12.0 26.5,11.0 33.5,11.0 34.5,12.0 33.5,13.0 26.5,13.0" fill="#505050"/><polygon points="45.5,3.0 54.5,3.0 53.5,5.0 46.5,5.0" fill="#38E838"/><polygon points="56.0,4.0 56.0,12.0 54.0,11.0 54.0,5.5" fill="#38E838"/><polygon points="56.0,13.0 56.0,21.0 54.0,19.5 54.0,14.0" fill="#38E838"/><polygon points="45.5,22.0 54.5,22.0 53.5,20.0 46.5,20.0" fill="#38E838"/><polygon points="44.0,13.0 44.0,21.0 46.0,19.5 46.0,14.0" fill="#505050"/><polygon points="44.0,4.0 44.0,12.0 46.0,11.0 46.0,5.5" fill="#38E838"/><polygon points="45.5,12.0 46.5,11.0 53.5,11.0 54.5,12.0 53.5,13.0 46.5,13.0" fill="#38E838"/><polygon points="65.5,3.0 74.5,3.0 73.5,5.0 66.5,5.0" fill="#38E838"/><polygon points="76.0,4.0 76.0,12.0 74.0,11.0 74.0,5.5" fill="#505050"/><polygon points="76.0,13.0 76.0,21.0 74.0,19.5 74.0,14.0" fill="#38E838"/><polygon points="65.5,22.0 74.5,22.0 73.5,20.0 66.5,20.0" fill="#38E838"/><polygon points="64.0,13.0 64.0,21.0 66.0,19.5 66.0,14.0" fill="#38E838"/><polygon points="64.0,4.0 64.0,12.0 66.0,11.0 66.0,5.5" fill="#38E838"/><polygon points="65.5,12.0 66.5,11.0 73.5,11.0 74.5,12.0 73.5,13.0 66.5,13.0" fill="#38E838"/><rect x="38.5" y="20" width="2" height="2" fill="#38E838"/></svg></div>
<div class="t" style="position:absolute;left:427px;top:197px;white-space:nowrap;font-size:12px;line-height:12px;color:#fff;letter-spacing:0.000px;">V</div>
<div style="left:292px;top:230px;width:158px;height:39px;background:#808080;border-style:solid;border-width:1px;border-color:#fff #C8C4B8 #C8C4B8 #fff"></div>
<div class="t" style="position:absolute;left:300px;top:246px;white-space:nowrap;font-size:12.5px;line-height:12.5px;color:#fff;letter-spacing:-0.200px;">APP3</div>
<div style="position:absolute;left:340px;top:238px;width:81px;height:25px;background:#000"><svg width="82" height="25" style="position:absolute;left:0;top:0"><polygon points="5.5,3.0 14.5,3.0 13.5,5.0 6.5,5.0" fill="#505050"/><polygon points="16.0,4.0 16.0,12.0 14.0,11.0 14.0,5.5" fill="#38E838"/><polygon points="16.0,13.0 16.0,21.0 14.0,19.5 14.0,14.0" fill="#38E838"/><polygon points="5.5,22.0 14.5,22.0 13.5,20.0 6.5,20.0" fill="#505050"/><polygon points="4.0,13.0 4.0,21.0 6.0,19.5 6.0,14.0" fill="#505050"/><polygon points="4.0,4.0 4.0,12.0 6.0,11.0 6.0,5.5" fill="#505050"/><polygon points="5.5,12.0 6.5,11.0 13.5,11.0 14.5,12.0 13.5,13.0 6.5,13.0" fill="#505050"/><polygon points="25.5,3.0 34.5,3.0 33.5,5.0 26.5,5.0" fill="#38E838"/><polygon points="36.0,4.0 36.0,12.0 34.0,11.0 34.0,5.5" fill="#38E838"/><polygon points="36.0,13.0 36.0,21.0 34.0,19.5 34.0,14.0" fill="#38E838"/><polygon points="25.5,22.0 34.5,22.0 33.5,20.0 26.5,20.0" fill="#38E838"/><polygon points="24.0,13.0 24.0,21.0 26.0,19.5 26.0,14.0" fill="#38E838"/><polygon points="24.0,4.0 24.0,12.0 26.0,11.0 26.0,5.5" fill="#38E838"/><polygon points="25.5,12.0 26.5,11.0 33.5,11.0 34.5,12.0 33.5,13.0 26.5,13.0" fill="#505050"/><polygon points="45.5,3.0 54.5,3.0 53.5,5.0 46.5,5.0" fill="#38E838"/><polygon points="56.0,4.0 56.0,12.0 54.0,11.0 54.0,5.5" fill="#38E838"/><polygon points="56.0,13.0 56.0,21.0 54.0,19.5 54.0,14.0" fill="#38E838"/><polygon points="45.5,22.0 54.5,22.0 53.5,20.0 46.5,20.0" fill="#38E838"/><polygon points="44.0,13.0 44.0,21.0 46.0,19.5 46.0,14.0" fill="#38E838"/><polygon points="44.0,4.0 44.0,12.0 46.0,11.0 46.0,5.5" fill="#38E838"/><polygon points="45.5,12.0 46.5,11.0 53.5,11.0 54.5,12.0 53.5,13.0 46.5,13.0" fill="#505050"/><polygon points="65.5,3.0 74.5,3.0 73.5,5.0 66.5,5.0" fill="#38E838"/><polygon points="76.0,4.0 76.0,12.0 74.0,11.0 74.0,5.5" fill="#505050"/><polygon points="76.0,13.0 76.0,21.0 74.0,19.5 74.0,14.0" fill="#38E838"/><polygon points="65.5,22.0 74.5,22.0 73.5,20.0 66.5,20.0" fill="#38E838"/><polygon points="64.0,13.0 64.0,21.0 66.0,19.5 66.0,14.0" fill="#505050"/><polygon points="64.0,4.0 64.0,12.0 66.0,11.0 66.0,5.5" fill="#38E838"/><polygon points="65.5,12.0 66.5,11.0 73.5,11.0 74.5,12.0 73.5,13.0 66.5,13.0" fill="#38E838"/><rect x="38.5" y="20" width="2" height="2" fill="#38E838"/></svg></div>
<div class="t" style="position:absolute;left:427px;top:245px;white-space:nowrap;font-size:12px;line-height:12px;color:#fff;letter-spacing:0.000px;">V</div>
<div style="left:460px;top:86px;width:158px;height:39px;background:#808080;border-style:solid;border-width:1px;border-color:#fff #C8C4B8 #C8C4B8 #fff"></div>
<div class="t" style="position:absolute;left:468px;top:102px;white-space:nowrap;font-size:12.5px;line-height:12.5px;color:#fff;letter-spacing:-0.200px;">BAT</div>
<div style="position:absolute;left:508px;top:94px;width:81px;height:25px;background:#000"><svg width="82" height="25" style="position:absolute;left:0;top:0"><polygon points="5.5,3.0 14.5,3.0 13.5,5.0 6.5,5.0" fill="#FF2424"/><polygon points="16.0,4.0 16.0,12.0 14.0,11.0 14.0,5.5" fill="#FF2424"/><polygon points="16.0,13.0 16.0,21.0 14.0,19.5 14.0,14.0" fill="#FF2424"/><polygon points="5.5,22.0 14.5,22.0 13.5,20.0 6.5,20.0" fill="#FF2424"/><polygon points="4.0,13.0 4.0,21.0 6.0,19.5 6.0,14.0" fill="#505050"/><polygon points="4.0,4.0 4.0,12.0 6.0,11.0 6.0,5.5" fill="#505050"/><polygon points="5.5,12.0 6.5,11.0 13.5,11.0 14.5,12.0 13.5,13.0 6.5,13.0" fill="#FF2424"/><polygon points="25.5,3.0 34.5,3.0 33.5,5.0 26.5,5.0" fill="#FF2424"/><polygon points="36.0,4.0 36.0,12.0 34.0,11.0 34.0,5.5" fill="#FF2424"/><polygon points="36.0,13.0 36.0,21.0 34.0,19.5 34.0,14.0" fill="#FF2424"/><polygon points="25.5,22.0 34.5,22.0 33.5,20.0 26.5,20.0" fill="#505050"/><polygon points="24.0,13.0 24.0,21.0 26.0,19.5 26.0,14.0" fill="#505050"/><polygon points="24.0,4.0 24.0,12.0 26.0,11.0 26.0,5.5" fill="#505050"/><polygon points="25.5,12.0 26.5,11.0 33.5,11.0 34.5,12.0 33.5,13.0 26.5,13.0" fill="#505050"/><polygon points="45.5,3.0 54.5,3.0 53.5,5.0 46.5,5.0" fill="#FF2424"/><polygon points="56.0,4.0 56.0,12.0 54.0,11.0 54.0,5.5" fill="#FF2424"/><polygon points="56.0,13.0 56.0,21.0 54.0,19.5 54.0,14.0" fill="#FF2424"/><polygon points="45.5,22.0 54.5,22.0 53.5,20.0 46.5,20.0" fill="#FF2424"/><polygon points="44.0,13.0 44.0,21.0 46.0,19.5 46.0,14.0" fill="#FF2424"/><polygon points="44.0,4.0 44.0,12.0 46.0,11.0 46.0,5.5" fill="#FF2424"/><polygon points="45.5,12.0 46.5,11.0 53.5,11.0 54.5,12.0 53.5,13.0 46.5,13.0" fill="#505050"/><polygon points="65.5,3.0 74.5,3.0 73.5,5.0 66.5,5.0" fill="#FF2424"/><polygon points="76.0,4.0 76.0,12.0 74.0,11.0 74.0,5.5" fill="#FF2424"/><polygon points="76.0,13.0 76.0,21.0 74.0,19.5 74.0,14.0" fill="#FF2424"/><polygon points="65.5,22.0 74.5,22.0 73.5,20.0 66.5,20.0" fill="#FF2424"/><polygon points="64.0,13.0 64.0,21.0 66.0,19.5 66.0,14.0" fill="#FF2424"/><polygon points="64.0,4.0 64.0,12.0 66.0,11.0 66.0,5.5" fill="#FF2424"/><polygon points="65.5,12.0 66.5,11.0 73.5,11.0 74.5,12.0 73.5,13.0 66.5,13.0" fill="#505050"/><rect x="38.5" y="20" width="2" height="2" fill="#FF2424"/></svg></div>
<div class="t" style="position:absolute;left:602px;top:101px;white-space:nowrap;font-size:12px;line-height:12px;color:#fff;letter-spacing:0.000px;">V</div>
<div style="left:460px;top:134px;width:158px;height:39px;background:#808080;border-style:solid;border-width:1px;border-color:#fff #C8C4B8 #C8C4B8 #fff"></div>
<div class="t" style="position:absolute;left:468px;top:150px;white-space:nowrap;font-size:12.5px;line-height:12.5px;color:#fff;letter-spacing:-0.200px;">CPP</div>
<div style="position:absolute;left:508px;top:141px;width:81px;height:30px;background:#000"><svg width="82" height="30" style="position:absolute;left:0;top:0"><rect x="2" y="1" width="2" height="2" fill="#4a4a4a"/><rect x="7" y="1" width="2" height="2" fill="#4a4a4a"/><rect x="12" y="1" width="2" height="2" fill="#4a4a4a"/><rect x="17" y="1" width="2" height="2" fill="#4a4a4a"/><rect x="22" y="1" width="2" height="2" fill="#4a4a4a"/><rect x="2" y="5" width="2" height="2" fill="#4a4a4a"/><rect x="7" y="5" width="2" height="2" fill="#4a4a4a"/><rect x="12" y="5" width="2" height="2" fill="#4a4a4a"/><rect x="17" y="5" width="2" height="2" fill="#4a4a4a"/><rect x="22" y="5" width="2" height="2" fill="#4a4a4a"/><rect x="2" y="9" width="2" height="2" fill="#4a4a4a"/><rect x="7" y="9" width="2" height="2" fill="#4a4a4a"/><rect x="12" y="9" width="2" height="2" fill="#4a4a4a"/><rect x="17" y="9" width="2" height="2" fill="#4a4a4a"/><rect x="22" y="9" width="2" height="2" fill="#4a4a4a"/><rect x="2" y="13" width="2" height="2" fill="#4a4a4a"/><rect x="7" y="13" width="2" height="2" fill="#4a4a4a"/><rect x="12" y="13" width="2" height="2" fill="#4a4a4a"/><rect x="17" y="13" width="2" height="2" fill="#4a4a4a"/><rect x="22" y="13" width="2" height="2" fill="#4a4a4a"/><rect x="2" y="17" width="2" height="2" fill="#4a4a4a"/><rect x="7" y="17" width="2" height="2" fill="#4a4a4a"/><rect x="12" y="17" width="2" height="2" fill="#4a4a4a"/><rect x="17" y="17" width="2" height="2" fill="#4a4a4a"/><rect x="22" y="17" width="2" height="2" fill="#4a4a4a"/><rect x="2" y="21" width="2" height="2" fill="#4a4a4a"/><rect x="7" y="21" width="2" height="2" fill="#4a4a4a"/><rect x="12" y="21" width="2" height="2" fill="#4a4a4a"/><rect x="17" y="21" width="2" height="2" fill="#4a4a4a"/><rect x="22" y="21" width="2" height="2" fill="#4a4a4a"/><rect x="2" y="25" width="2" height="2" fill="#4a4a4a"/><rect x="7" y="25" width="2" height="2" fill="#4a4a4a"/><rect x="12" y="25" width="2" height="2" fill="#4a4a4a"/><rect x="17" y="25" width="2" height="2" fill="#4a4a4a"/><rect x="22" y="25" width="2" height="2" fill="#4a4a4a"/><rect x="29" y="1" width="2" height="2" fill="#4a4a4a"/><rect x="34" y="1" width="2" height="2" fill="#3cf03c"/><rect x="39" y="1" width="2" height="2" fill="#3cf03c"/><rect x="44" y="1" width="2" height="2" fill="#3cf03c"/><rect x="49" y="1" width="2" height="2" fill="#4a4a4a"/><rect x="29" y="5" width="2" height="2" fill="#3cf03c"/><rect x="34" y="5" width="2" height="2" fill="#4a4a4a"/><rect x="39" y="5" width="2" height="2" fill="#4a4a4a"/><rect x="44" y="5" width="2" height="2" fill="#4a4a4a"/><rect x="49" y="5" width="2" height="2" fill="#3cf03c"/><rect x="29" y="9" width="2" height="2" fill="#3cf03c"/><rect x="34" y="9" width="2" height="2" fill="#4a4a4a"/><rect x="39" y="9" width="2" height="2" fill="#4a4a4a"/><rect x="44" y="9" width="2" height="2" fill="#4a4a4a"/><rect x="49" y="9" width="2" height="2" fill="#3cf03c"/><rect x="29" y="13" width="2" height="2" fill="#3cf03c"/><rect x="34" y="13" width="2" height="2" fill="#4a4a4a"/><rect x="39" y="13" width="2" height="2" fill="#4a4a4a"/><rect x="44" y="13" width="2" height="2" fill="#4a4a4a"/><rect x="49" y="13" width="2" height="2" fill="#3cf03c"/><rect x="29" y="17" width="2" height="2" fill="#3cf03c"/><rect x="34" y="17" width="2" height="2" fill="#4a4a4a"/><rect x="39" y="17" width="2" height="2" fill="#4a4a4a"/><rect x="44" y="17" width="2" height="2" fill="#4a4a4a"/><rect x="49" y="17" width="2" height="2" fill="#3cf03c"/><rect x="29" y="21" width="2" height="2" fill="#3cf03c"/><rect x="34" y="21" width="2" height="2" fill="#4a4a4a"/><rect x="39" y="21" width="2" height="2" fill="#4a4a4a"/><rect x="44" y="21" width="2" height="2" fill="#4a4a4a"/><rect x="49" y="21" width="2" height="2" fill="#3cf03c"/><rect x="29" y="25" width="2" height="2" fill="#4a4a4a"/><rect x="34" y="25" width="2" height="2" fill="#3cf03c"/><rect x="39" y="25" width="2" height="2" fill="#3cf03c"/><rect x="44" y="25" width="2" height="2" fill="#3cf03c"/><rect x="49" y="25" width="2" height="2" fill="#4a4a4a"/><rect x="56" y="1" width="2" height="2" fill="#3cf03c"/><rect x="61" y="1" width="2" height="2" fill="#4a4a4a"/><rect x="66" y="1" width="2" height="2" fill="#4a4a4a"/><rect x="71" y="1" width="2" height="2" fill="#4a4a4a"/><rect x="76" y="1" width="2" height="2" fill="#3cf03c"/><rect x="56" y="5" width="2" height="2" fill="#3cf03c"/><rect x="61" y="5" width="2" height="2" fill="#4a4a4a"/><rect x="66" y="5" width="2" height="2" fill="#4a4a4a"/><rect x="71" y="5" width="2" height="2" fill="#4a4a4a"/><rect x="76" y="5" width="2" height="2" fill="#3cf03c"/><rect x="56" y="9" width="2" height="2" fill="#3cf03c"/><rect x="61" y="9" width="2" height="2" fill="#3cf03c"/><rect x="66" y="9" width="2" height="2" fill="#4a4a4a"/><rect x="71" y="9" width="2" height="2" fill="#4a4a4a"/><rect x="76" y="9" width="2" height="2" fill="#3cf03c"/><rect x="56" y="13" width="2" height="2" fill="#3cf03c"/><rect x="61" y="13" width="2" height="2" fill="#4a4a4a"/><rect x="66" y="13" width="2" height="2" fill="#3cf03c"/><rect x="71" y="13" width="2" height="2" fill="#4a4a4a"/><rect x="76" y="13" width="2" height="2" fill="#3cf03c"/><rect x="56" y="17" width="2" height="2" fill="#3cf03c"/><rect x="61" y="17" width="2" height="2" fill="#4a4a4a"/><rect x="66" y="17" width="2" height="2" fill="#4a4a4a"/><rect x="71" y="17" width="2" height="2" fill="#3cf03c"/><rect x="76" y="17" width="2" height="2" fill="#3cf03c"/><rect x="56" y="21" width="2" height="2" fill="#3cf03c"/><rect x="61" y="21" width="2" height="2" fill="#4a4a4a"/><rect x="66" y="21" width="2" height="2" fill="#4a4a4a"/><rect x="71" y="21" width="2" height="2" fill="#4a4a4a"/><rect x="76" y="21" width="2" height="2" fill="#3cf03c"/><rect x="56" y="25" width="2" height="2" fill="#3cf03c"/><rect x="61" y="25" width="2" height="2" fill="#4a4a4a"/><rect x="66" y="25" width="2" height="2" fill="#4a4a4a"/><rect x="71" y="25" width="2" height="2" fill="#4a4a4a"/><rect x="76" y="25" width="2" height="2" fill="#3cf03c"/></svg></div>
<div style="left:460px;top:182px;width:158px;height:39px;background:#808080;border-style:solid;border-width:1px;border-color:#fff #C8C4B8 #C8C4B8 #fff"></div>
<div class="t" style="position:absolute;left:468px;top:198px;white-space:nowrap;font-size:12.5px;line-height:12.5px;color:#fff;letter-spacing:-0.200px;">BPP</div>
<div style="position:absolute;left:508px;top:189px;width:81px;height:30px;background:#000"><svg width="82" height="30" style="position:absolute;left:0;top:0"><rect x="2" y="1" width="2" height="2" fill="#4a4a4a"/><rect x="7" y="1" width="2" height="2" fill="#4a4a4a"/><rect x="12" y="1" width="2" height="2" fill="#4a4a4a"/><rect x="17" y="1" width="2" height="2" fill="#4a4a4a"/><rect x="22" y="1" width="2" height="2" fill="#4a4a4a"/><rect x="2" y="5" width="2" height="2" fill="#4a4a4a"/><rect x="7" y="5" width="2" height="2" fill="#4a4a4a"/><rect x="12" y="5" width="2" height="2" fill="#4a4a4a"/><rect x="17" y="5" width="2" height="2" fill="#4a4a4a"/><rect x="22" y="5" width="2" height="2" fill="#4a4a4a"/><rect x="2" y="9" width="2" height="2" fill="#4a4a4a"/><rect x="7" y="9" width="2" height="2" fill="#4a4a4a"/><rect x="12" y="9" width="2" height="2" fill="#4a4a4a"/><rect x="17" y="9" width="2" height="2" fill="#4a4a4a"/><rect x="22" y="9" width="2" height="2" fill="#4a4a4a"/><rect x="2" y="13" width="2" height="2" fill="#4a4a4a"/><rect x="7" y="13" width="2" height="2" fill="#4a4a4a"/><rect x="12" y="13" width="2" height="2" fill="#4a4a4a"/><rect x="17" y="13" width="2" height="2" fill="#4a4a4a"/><rect x="22" y="13" width="2" height="2" fill="#4a4a4a"/><rect x="2" y="17" width="2" height="2" fill="#4a4a4a"/><rect x="7" y="17" width="2" height="2" fill="#4a4a4a"/><rect x="12" y="17" width="2" height="2" fill="#4a4a4a"/><rect x="17" y="17" width="2" height="2" fill="#4a4a4a"/><rect x="22" y="17" width="2" height="2" fill="#4a4a4a"/><rect x="2" y="21" width="2" height="2" fill="#4a4a4a"/><rect x="7" y="21" width="2" height="2" fill="#4a4a4a"/><rect x="12" y="21" width="2" height="2" fill="#4a4a4a"/><rect x="17" y="21" width="2" height="2" fill="#4a4a4a"/><rect x="22" y="21" width="2" height="2" fill="#4a4a4a"/><rect x="2" y="25" width="2" height="2" fill="#4a4a4a"/><rect x="7" y="25" width="2" height="2" fill="#4a4a4a"/><rect x="12" y="25" width="2" height="2" fill="#4a4a4a"/><rect x="17" y="25" width="2" height="2" fill="#4a4a4a"/><rect x="22" y="25" width="2" height="2" fill="#4a4a4a"/><rect x="29" y="1" width="2" height="2" fill="#4a4a4a"/><rect x="34" y="1" width="2" height="2" fill="#3cf03c"/><rect x="39" y="1" width="2" height="2" fill="#3cf03c"/><rect x="44" y="1" width="2" height="2" fill="#3cf03c"/><rect x="49" y="1" width="2" height="2" fill="#4a4a4a"/><rect x="29" y="5" width="2" height="2" fill="#3cf03c"/><rect x="34" y="5" width="2" height="2" fill="#4a4a4a"/><rect x="39" y="5" width="2" height="2" fill="#4a4a4a"/><rect x="44" y="5" width="2" height="2" fill="#4a4a4a"/><rect x="49" y="5" width="2" height="2" fill="#3cf03c"/><rect x="29" y="9" width="2" height="2" fill="#3cf03c"/><rect x="34" y="9" width="2" height="2" fill="#4a4a4a"/><rect x="39" y="9" width="2" height="2" fill="#4a4a4a"/><rect x="44" y="9" width="2" height="2" fill="#4a4a4a"/><rect x="49" y="9" width="2" height="2" fill="#3cf03c"/><rect x="29" y="13" width="2" height="2" fill="#3cf03c"/><rect x="34" y="13" width="2" height="2" fill="#4a4a4a"/><rect x="39" y="13" width="2" height="2" fill="#4a4a4a"/><rect x="44" y="13" width="2" height="2" fill="#4a4a4a"/><rect x="49" y="13" width="2" height="2" fill="#3cf03c"/><rect x="29" y="17" width="2" height="2" fill="#3cf03c"/><rect x="34" y="17" width="2" height="2" fill="#4a4a4a"/><rect x="39" y="17" width="2" height="2" fill="#4a4a4a"/><rect x="44" y="17" width="2" height="2" fill="#4a4a4a"/><rect x="49" y="17" width="2" height="2" fill="#3cf03c"/><rect x="29" y="21" width="2" height="2" fill="#3cf03c"/><rect x="34" y="21" width="2" height="2" fill="#4a4a4a"/><rect x="39" y="21" width="2" height="2" fill="#4a4a4a"/><rect x="44" y="21" width="2" height="2" fill="#4a4a4a"/><rect x="49" y="21" width="2" height="2" fill="#3cf03c"/><rect x="29" y="25" width="2" height="2" fill="#4a4a4a"/><rect x="34" y="25" width="2" height="2" fill="#3cf03c"/><rect x="39" y="25" width="2" height="2" fill="#3cf03c"/><rect x="44" y="25" width="2" height="2" fill="#3cf03c"/><rect x="49" y="25" width="2" height="2" fill="#4a4a4a"/><rect x="56" y="1" width="2" height="2" fill="#3cf03c"/><rect x="61" y="1" width="2" height="2" fill="#4a4a4a"/><rect x="66" y="1" width="2" height="2" fill="#4a4a4a"/><rect x="71" y="1" width="2" height="2" fill="#4a4a4a"/><rect x="76" y="1" width="2" height="2" fill="#3cf03c"/><rect x="56" y="5" width="2" height="2" fill="#3cf03c"/><rect x="61" y="5" width="2" height="2" fill="#4a4a4a"/><rect x="66" y="5" width="2" height="2" fill="#4a4a4a"/><rect x="71" y="5" width="2" height="2" fill="#4a4a4a"/><rect x="76" y="5" width="2" height="2" fill="#3cf03c"/><rect x="56" y="9" width="2" height="2" fill="#3cf03c"/><rect x="61" y="9" width="2" height="2" fill="#3cf03c"/><rect x="66" y="9" width="2" height="2" fill="#4a4a4a"/><rect x="71" y="9" width="2" height="2" fill="#4a4a4a"/><rect x="76" y="9" width="2" height="2" fill="#3cf03c"/><rect x="56" y="13" width="2" height="2" fill="#3cf03c"/><rect x="61" y="13" width="2" height="2" fill="#4a4a4a"/><rect x="66" y="13" width="2" height="2" fill="#3cf03c"/><rect x="71" y="13" width="2" height="2" fill="#4a4a4a"/><rect x="76" y="13" width="2" height="2" fill="#3cf03c"/><rect x="56" y="17" width="2" height="2" fill="#3cf03c"/><rect x="61" y="17" width="2" height="2" fill="#4a4a4a"/><rect x="66" y="17" width="2" height="2" fill="#4a4a4a"/><rect x="71" y="17" width="2" height="2" fill="#3cf03c"/><rect x="76" y="17" width="2" height="2" fill="#3cf03c"/><rect x="56" y="21" width="2" height="2" fill="#3cf03c"/><rect x="61" y="21" width="2" height="2" fill="#4a4a4a"/><rect x="66" y="21" width="2" height="2" fill="#4a4a4a"/><rect x="71" y="21" width="2" height="2" fill="#4a4a4a"/><rect x="76" y="21" width="2" height="2" fill="#3cf03c"/><rect x="56" y="25" width="2" height="2" fill="#3cf03c"/><rect x="61" y="25" width="2" height="2" fill="#4a4a4a"/><rect x="66" y="25" width="2" height="2" fill="#4a4a4a"/><rect x="71" y="25" width="2" height="2" fill="#4a4a4a"/><rect x="76" y="25" width="2" height="2" fill="#3cf03c"/></svg></div>
<div style="left:460px;top:230px;width:158px;height:39px;background:#808080;border-style:solid;border-width:1px;border-color:#fff #C8C4B8 #C8C4B8 #fff"></div>
<div class="t" style="position:absolute;left:468px;top:246px;white-space:nowrap;font-size:12.5px;line-height:12.5px;color:#fff;letter-spacing:0.125px;">A/C</div>
<div style="position:absolute;left:508px;top:237px;width:81px;height:30px;background:#000"><svg width="82" height="30" style="position:absolute;left:0;top:0"><rect x="2" y="1" width="2" height="2" fill="#4a4a4a"/><rect x="7" y="1" width="2" height="2" fill="#3cf03c"/><rect x="12" y="1" width="2" height="2" fill="#3cf03c"/><rect x="17" y="1" width="2" height="2" fill="#3cf03c"/><rect x="22" y="1" width="2" height="2" fill="#4a4a4a"/><rect x="2" y="5" width="2" height="2" fill="#3cf03c"/><rect x="7" y="5" width="2" height="2" fill="#4a4a4a"/><rect x="12" y="5" width="2" height="2" fill="#4a4a4a"/><rect x="17" y="5" width="2" height="2" fill="#4a4a4a"/><rect x="22" y="5" width="2" height="2" fill="#3cf03c"/><rect x="2" y="9" width="2" height="2" fill="#3cf03c"/><rect x="7" y="9" width="2" height="2" fill="#4a4a4a"/><rect x="12" y="9" width="2" height="2" fill="#4a4a4a"/><rect x="17" y="9" width="2" height="2" fill="#4a4a4a"/><rect x="22" y="9" width="2" height="2" fill="#3cf03c"/><rect x="2" y="13" width="2" height="2" fill="#3cf03c"/><rect x="7" y="13" width="2" height="2" fill="#4a4a4a"/><rect x="12" y="13" width="2" height="2" fill="#4a4a4a"/><rect x="17" y="13" width="2" height="2" fill="#4a4a4a"/><rect x="22" y="13" width="2" height="2" fill="#3cf03c"/><rect x="2" y="17" width="2" height="2" fill="#3cf03c"/><rect x="7" y="17" width="2" height="2" fill="#4a4a4a"/><rect x="12" y="17" width="2" height="2" fill="#4a4a4a"/><rect x="17" y="17" width="2" height="2" fill="#4a4a4a"/><rect x="22" y="17" width="2" height="2" fill="#3cf03c"/><rect x="2" y="21" width="2" height="2" fill="#3cf03c"/><rect x="7" y="21" width="2" height="2" fill="#4a4a4a"/><rect x="12" y="21" width="2" height="2" fill="#4a4a4a"/><rect x="17" y="21" width="2" height="2" fill="#4a4a4a"/><rect x="22" y="21" width="2" height="2" fill="#3cf03c"/><rect x="2" y="25" width="2" height="2" fill="#4a4a4a"/><rect x="7" y="25" width="2" height="2" fill="#3cf03c"/><rect x="12" y="25" width="2" height="2" fill="#3cf03c"/><rect x="17" y="25" width="2" height="2" fill="#3cf03c"/><rect x="22" y="25" width="2" height="2" fill="#4a4a4a"/><rect x="29" y="1" width="2" height="2" fill="#3cf03c"/><rect x="34" y="1" width="2" height="2" fill="#3cf03c"/><rect x="39" y="1" width="2" height="2" fill="#3cf03c"/><rect x="44" y="1" width="2" height="2" fill="#3cf03c"/><rect x="49" y="1" width="2" height="2" fill="#3cf03c"/><rect x="29" y="5" width="2" height="2" fill="#3cf03c"/><rect x="34" y="5" width="2" height="2" fill="#4a4a4a"/><rect x="39" y="5" width="2" height="2" fill="#4a4a4a"/><rect x="44" y="5" width="2" height="2" fill="#4a4a4a"/><rect x="49" y="5" width="2" height="2" fill="#4a4a4a"/><rect x="29" y="9" width="2" height="2" fill="#3cf03c"/><rect x="34" y="9" width="2" height="2" fill="#4a4a4a"/><rect x="39" y="9" width="2" height="2" fill="#4a4a4a"/><rect x="44" y="9" width="2" height="2" fill="#4a4a4a"/><rect x="49" y="9" width="2" height="2" fill="#4a4a4a"/><rect x="29" y="13" width="2" height="2" fill="#3cf03c"/><rect x="34" y="13" width="2" height="2" fill="#3cf03c"/><rect x="39" y="13" width="2" height="2" fill="#3cf03c"/><rect x="44" y="13" width="2" height="2" fill="#4a4a4a"/><rect x="49" y="13" width="2" height="2" fill="#4a4a4a"/><rect x="29" y="17" width="2" height="2" fill="#3cf03c"/><rect x="34" y="17" width="2" height="2" fill="#4a4a4a"/><rect x="39" y="17" width="2" height="2" fill="#4a4a4a"/><rect x="44" y="17" width="2" height="2" fill="#4a4a4a"/><rect x="49" y="17" width="2" height="2" fill="#4a4a4a"/><rect x="29" y="21" width="2" height="2" fill="#3cf03c"/><rect x="34" y="21" width="2" height="2" fill="#4a4a4a"/><rect x="39" y="21" width="2" height="2" fill="#4a4a4a"/><rect x="44" y="21" width="2" height="2" fill="#4a4a4a"/><rect x="49" y="21" width="2" height="2" fill="#4a4a4a"/><rect x="29" y="25" width="2" height="2" fill="#3cf03c"/><rect x="34" y="25" width="2" height="2" fill="#4a4a4a"/><rect x="39" y="25" width="2" height="2" fill="#4a4a4a"/><rect x="44" y="25" width="2" height="2" fill="#4a4a4a"/><rect x="49" y="25" width="2" height="2" fill="#4a4a4a"/><rect x="56" y="1" width="2" height="2" fill="#3cf03c"/><rect x="61" y="1" width="2" height="2" fill="#3cf03c"/><rect x="66" y="1" width="2" height="2" fill="#3cf03c"/><rect x="71" y="1" width="2" height="2" fill="#3cf03c"/><rect x="76" y="1" width="2" height="2" fill="#3cf03c"/><rect x="56" y="5" width="2" height="2" fill="#3cf03c"/><rect x="61" y="5" width="2" height="2" fill="#4a4a4a"/><rect x="66" y="5" width="2" height="2" fill="#4a4a4a"/><rect x="71" y="5" width="2" height="2" fill="#4a4a4a"/><rect x="76" y="5" width="2" height="2" fill="#4a4a4a"/><rect x="56" y="9" width="2" height="2" fill="#3cf03c"/><rect x="61" y="9" width="2" height="2" fill="#4a4a4a"/><rect x="66" y="9" width="2" height="2" fill="#4a4a4a"/><rect x="71" y="9" width="2" height="2" fill="#4a4a4a"/><rect x="76" y="9" width="2" height="2" fill="#4a4a4a"/><rect x="56" y="13" width="2" height="2" fill="#3cf03c"/><rect x="61" y="13" width="2" height="2" fill="#3cf03c"/><rect x="66" y="13" width="2" height="2" fill="#3cf03c"/><rect x="71" y="13" width="2" height="2" fill="#4a4a4a"/><rect x="76" y="13" width="2" height="2" fill="#4a4a4a"/><rect x="56" y="17" width="2" height="2" fill="#3cf03c"/><rect x="61" y="17" width="2" height="2" fill="#4a4a4a"/><rect x="66" y="17" width="2" height="2" fill="#4a4a4a"/><rect x="71" y="17" width="2" height="2" fill="#4a4a4a"/><rect x="76" y="17" width="2" height="2" fill="#4a4a4a"/><rect x="56" y="21" width="2" height="2" fill="#3cf03c"/><rect x="61" y="21" width="2" height="2" fill="#4a4a4a"/><rect x="66" y="21" width="2" height="2" fill="#4a4a4a"/><rect x="71" y="21" width="2" height="2" fill="#4a4a4a"/><rect x="76" y="21" width="2" height="2" fill="#4a4a4a"/><rect x="56" y="25" width="2" height="2" fill="#3cf03c"/><rect x="61" y="25" width="2" height="2" fill="#4a4a4a"/><rect x="66" y="25" width="2" height="2" fill="#4a4a4a"/><rect x="71" y="25" width="2" height="2" fill="#4a4a4a"/><rect x="76" y="25" width="2" height="2" fill="#4a4a4a"/></svg></div>
<div style="left:460px;top:278px;width:158px;height:39px;background:#808080;border-style:solid;border-width:1px;border-color:#fff #C8C4B8 #C8C4B8 #fff"></div>
<div class="t" style="position:absolute;left:468px;top:294px;white-space:nowrap;font-size:12.5px;line-height:12.5px;color:#fff;letter-spacing:-0.200px;">VSS</div>
<div style="position:absolute;left:508px;top:286px;width:81px;height:25px;background:#000"><svg width="82" height="25" style="position:absolute;left:0;top:0"><polygon points="5.5,3.0 14.5,3.0 13.5,5.0 6.5,5.0" fill="#505050"/><polygon points="16.0,4.0 16.0,12.0 14.0,11.0 14.0,5.5" fill="#505050"/><polygon points="16.0,13.0 16.0,21.0 14.0,19.5 14.0,14.0" fill="#505050"/><polygon points="5.5,22.0 14.5,22.0 13.5,20.0 6.5,20.0" fill="#505050"/><polygon points="4.0,13.0 4.0,21.0 6.0,19.5 6.0,14.0" fill="#505050"/><polygon points="4.0,4.0 4.0,12.0 6.0,11.0 6.0,5.5" fill="#505050"/><polygon points="5.5,12.0 6.5,11.0 13.5,11.0 14.5,12.0 13.5,13.0 6.5,13.0" fill="#505050"/><polygon points="25.5,3.0 34.5,3.0 33.5,5.0 26.5,5.0" fill="#505050"/><polygon points="36.0,4.0 36.0,12.0 34.0,11.0 34.0,5.5" fill="#FF2424"/><polygon points="36.0,13.0 36.0,21.0 34.0,19.5 34.0,14.0" fill="#FF2424"/><polygon points="25.5,22.0 34.5,22.0 33.5,20.0 26.5,20.0" fill="#505050"/><polygon points="24.0,13.0 24.0,21.0 26.0,19.5 26.0,14.0" fill="#505050"/><polygon points="24.0,4.0 24.0,12.0 26.0,11.0 26.0,5.5" fill="#505050"/><polygon points="25.5,12.0 26.5,11.0 33.5,11.0 34.5,12.0 33.5,13.0 26.5,13.0" fill="#505050"/><polygon points="45.5,3.0 54.5,3.0 53.5,5.0 46.5,5.0" fill="#FF2424"/><polygon points="56.0,4.0 56.0,12.0 54.0,11.0 54.0,5.5" fill="#FF2424"/><polygon points="56.0,13.0 56.0,21.0 54.0,19.5 54.0,14.0" fill="#FF2424"/><polygon points="45.5,22.0 54.5,22.0 53.5,20.0 46.5,20.0" fill="#FF2424"/><polygon points="44.0,13.0 44.0,21.0 46.0,19.5 46.0,14.0" fill="#505050"/><polygon points="44.0,4.0 44.0,12.0 46.0,11.0 46.0,5.5" fill="#FF2424"/><polygon points="45.5,12.0 46.5,11.0 53.5,11.0 54.5,12.0 53.5,13.0 46.5,13.0" fill="#FF2424"/><polygon points="65.5,3.0 74.5,3.0 73.5,5.0 66.5,5.0" fill="#FF2424"/><polygon points="76.0,4.0 76.0,12.0 74.0,11.0 74.0,5.5" fill="#505050"/><polygon points="76.0,13.0 76.0,21.0 74.0,19.5 74.0,14.0" fill="#FF2424"/><polygon points="65.5,22.0 74.5,22.0 73.5,20.0 66.5,20.0" fill="#FF2424"/><polygon points="64.0,13.0 64.0,21.0 66.0,19.5 66.0,14.0" fill="#505050"/><polygon points="64.0,4.0 64.0,12.0 66.0,11.0 66.0,5.5" fill="#FF2424"/><polygon points="65.5,12.0 66.5,11.0 73.5,11.0 74.5,12.0 73.5,13.0 66.5,13.0" fill="#FF2424"/></svg></div>
<div class="t" style="position:absolute;left:595px;top:293px;white-space:nowrap;font-size:11px;line-height:11px;color:#fff;letter-spacing:-0.117px;">km/h</div>
<div style="left:626px;top:86px;width:158px;height:39px;background:#808080;border-style:solid;border-width:1px;border-color:#fff #C8C4B8 #C8C4B8 #fff"></div>
<div class="t" style="position:absolute;left:634px;top:102px;white-space:nowrap;font-size:12.5px;line-height:12.5px;color:#fff;letter-spacing:-0.200px;">CHT</div>
<div style="position:absolute;left:674px;top:94px;width:81px;height:25px;background:#000"><svg width="82" height="25" style="position:absolute;left:0;top:0"><polygon points="5.5,3.0 14.5,3.0 13.5,5.0 6.5,5.0" fill="#505050"/><polygon points="16.0,4.0 16.0,12.0 14.0,11.0 14.0,5.5" fill="#505050"/><polygon points="16.0,13.0 16.0,21.0 14.0,19.5 14.0,14.0" fill="#505050"/><polygon points="5.5,22.0 14.5,22.0 13.5,20.0 6.5,20.0" fill="#505050"/><polygon points="4.0,13.0 4.0,21.0 6.0,19.5 6.0,14.0" fill="#505050"/><polygon points="4.0,4.0 4.0,12.0 6.0,11.0 6.0,5.5" fill="#505050"/><polygon points="5.5,12.0 6.5,11.0 13.5,11.0 14.5,12.0 13.5,13.0 6.5,13.0" fill="#505050"/><polygon points="25.5,3.0 34.5,3.0 33.5,5.0 26.5,5.0" fill="#505050"/><polygon points="36.0,4.0 36.0,12.0 34.0,11.0 34.0,5.5" fill="#505050"/><polygon points="36.0,13.0 36.0,21.0 34.0,19.5 34.0,14.0" fill="#505050"/><polygon points="25.5,22.0 34.5,22.0 33.5,20.0 26.5,20.0" fill="#505050"/><polygon points="24.0,13.0 24.0,21.0 26.0,19.5 26.0,14.0" fill="#505050"/><polygon points="24.0,4.0 24.0,12.0 26.0,11.0 26.0,5.5" fill="#505050"/><polygon points="25.5,12.0 26.5,11.0 33.5,11.0 34.5,12.0 33.5,13.0 26.5,13.0" fill="#505050"/><polygon points="45.5,3.0 54.5,3.0 53.5,5.0 46.5,5.0" fill="#505050"/><polygon points="56.0,4.0 56.0,12.0 54.0,11.0 54.0,5.5" fill="#505050"/><polygon points="56.0,13.0 56.0,21.0 54.0,19.5 54.0,14.0" fill="#505050"/><polygon points="45.5,22.0 54.5,22.0 53.5,20.0 46.5,20.0" fill="#505050"/><polygon points="44.0,13.0 44.0,21.0 46.0,19.5 46.0,14.0" fill="#505050"/><polygon points="44.0,4.0 44.0,12.0 46.0,11.0 46.0,5.5" fill="#505050"/><polygon points="45.5,12.0 46.5,11.0 53.5,11.0 54.5,12.0 53.5,13.0 46.5,13.0" fill="#38D8F0"/><polygon points="65.5,3.0 74.5,3.0 73.5,5.0 66.5,5.0" fill="#38D8F0"/><polygon points="76.0,4.0 76.0,12.0 74.0,11.0 74.0,5.5" fill="#38D8F0"/><polygon points="76.0,13.0 76.0,21.0 74.0,19.5 74.0,14.0" fill="#38D8F0"/><polygon points="65.5,22.0 74.5,22.0 73.5,20.0 66.5,20.0" fill="#505050"/><polygon points="64.0,13.0 64.0,21.0 66.0,19.5 66.0,14.0" fill="#505050"/><polygon points="64.0,4.0 64.0,12.0 66.0,11.0 66.0,5.5" fill="#505050"/><polygon points="65.5,12.0 66.5,11.0 73.5,11.0 74.5,12.0 73.5,13.0 66.5,13.0" fill="#505050"/></svg></div>
<div class="t" style="position:absolute;left:762px;top:98px;white-space:nowrap;font-size:12px;line-height:12px;color:#fff;letter-spacing:0.000px;">&deg;</div>
<div class="t" style="position:absolute;left:768px;top:102px;white-space:nowrap;font-size:12.5px;line-height:12.5px;color:#fff;letter-spacing:0.000px;">C</div>
<div style="left:626px;top:134px;width:158px;height:39px;background:#808080;border-style:solid;border-width:1px;border-color:#fff #C8C4B8 #C8C4B8 #fff"></div>
<div class="t" style="position:absolute;left:634px;top:150px;white-space:nowrap;font-size:12.5px;line-height:12.5px;color:#fff;letter-spacing:-0.200px;">FTS</div>
<div style="position:absolute;left:674px;top:142px;width:81px;height:25px;background:#000"><svg width="82" height="25" style="position:absolute;left:0;top:0"><polygon points="5.5,3.0 14.5,3.0 13.5,5.0 6.5,5.0" fill="#505050"/><polygon points="16.0,4.0 16.0,12.0 14.0,11.0 14.0,5.5" fill="#505050"/><polygon points="16.0,13.0 16.0,21.0 14.0,19.5 14.0,14.0" fill="#505050"/><polygon points="5.5,22.0 14.5,22.0 13.5,20.0 6.5,20.0" fill="#505050"/><polygon points="4.0,13.0 4.0,21.0 6.0,19.5 6.0,14.0" fill="#505050"/><polygon points="4.0,4.0 4.0,12.0 6.0,11.0 6.0,5.5" fill="#505050"/><polygon points="5.5,12.0 6.5,11.0 13.5,11.0 14.5,12.0 13.5,13.0 6.5,13.0" fill="#505050"/><polygon points="25.5,3.0 34.5,3.0 33.5,5.0 26.5,5.0" fill="#505050"/><polygon points="36.0,4.0 36.0,12.0 34.0,11.0 34.0,5.5" fill="#505050"/><polygon points="36.0,13.0 36.0,21.0 34.0,19.5 34.0,14.0" fill="#505050"/><polygon points="25.5,22.0 34.5,22.0 33.5,20.0 26.5,20.0" fill="#505050"/><polygon points="24.0,13.0 24.0,21.0 26.0,19.5 26.0,14.0" fill="#505050"/><polygon points="24.0,4.0 24.0,12.0 26.0,11.0 26.0,5.5" fill="#505050"/><polygon points="25.5,12.0 26.5,11.0 33.5,11.0 34.5,12.0 33.5,13.0 26.5,13.0" fill="#505050"/><polygon points="45.5,3.0 54.5,3.0 53.5,5.0 46.5,5.0" fill="#38D8F0"/><polygon points="56.0,4.0 56.0,12.0 54.0,11.0 54.0,5.5" fill="#38D8F0"/><polygon points="56.0,13.0 56.0,21.0 54.0,19.5 54.0,14.0" fill="#38D8F0"/><polygon points="45.5,22.0 54.5,22.0 53.5,20.0 46.5,20.0" fill="#38D8F0"/><polygon points="44.0,13.0 44.0,21.0 46.0,19.5 46.0,14.0" fill="#505050"/><polygon points="44.0,4.0 44.0,12.0 46.0,11.0 46.0,5.5" fill="#505050"/><polygon points="45.5,12.0 46.5,11.0 53.5,11.0 54.5,12.0 53.5,13.0 46.5,13.0" fill="#38D8F0"/><polygon points="65.5,3.0 74.5,3.0 73.5,5.0 66.5,5.0" fill="#38D8F0"/><polygon points="76.0,4.0 76.0,12.0 74.0,11.0 74.0,5.5" fill="#38D8F0"/><polygon points="76.0,13.0 76.0,21.0 74.0,19.5 74.0,14.0" fill="#505050"/><polygon points="65.5,22.0 74.5,22.0 73.5,20.0 66.5,20.0" fill="#38D8F0"/><polygon points="64.0,13.0 64.0,21.0 66.0,19.5 66.0,14.0" fill="#38D8F0"/><polygon points="64.0,4.0 64.0,12.0 66.0,11.0 66.0,5.5" fill="#505050"/><polygon points="65.5,12.0 66.5,11.0 73.5,11.0 74.5,12.0 73.5,13.0 66.5,13.0" fill="#38D8F0"/></svg></div>
<div class="t" style="position:absolute;left:762px;top:146px;white-space:nowrap;font-size:12px;line-height:12px;color:#fff;letter-spacing:0.000px;">&deg;</div>
<div class="t" style="position:absolute;left:768px;top:150px;white-space:nowrap;font-size:12.5px;line-height:12.5px;color:#fff;letter-spacing:0.000px;">C</div>
<div style="left:626px;top:182px;width:158px;height:39px;background:#808080;border-style:solid;border-width:1px;border-color:#fff #C8C4B8 #C8C4B8 #fff"></div>
<div class="t" style="position:absolute;left:634px;top:198px;white-space:nowrap;font-size:12.5px;line-height:12.5px;color:#fff;letter-spacing:-0.200px;">IAT</div>
<div style="position:absolute;left:674px;top:190px;width:81px;height:25px;background:#000"><svg width="82" height="25" style="position:absolute;left:0;top:0"><polygon points="5.5,3.0 14.5,3.0 13.5,5.0 6.5,5.0" fill="#505050"/><polygon points="16.0,4.0 16.0,12.0 14.0,11.0 14.0,5.5" fill="#505050"/><polygon points="16.0,13.0 16.0,21.0 14.0,19.5 14.0,14.0" fill="#505050"/><polygon points="5.5,22.0 14.5,22.0 13.5,20.0 6.5,20.0" fill="#505050"/><polygon points="4.0,13.0 4.0,21.0 6.0,19.5 6.0,14.0" fill="#505050"/><polygon points="4.0,4.0 4.0,12.0 6.0,11.0 6.0,5.5" fill="#505050"/><polygon points="5.5,12.0 6.5,11.0 13.5,11.0 14.5,12.0 13.5,13.0 6.5,13.0" fill="#505050"/><polygon points="25.5,3.0 34.5,3.0 33.5,5.0 26.5,5.0" fill="#505050"/><polygon points="36.0,4.0 36.0,12.0 34.0,11.0 34.0,5.5" fill="#505050"/><polygon points="36.0,13.0 36.0,21.0 34.0,19.5 34.0,14.0" fill="#505050"/><polygon points="25.5,22.0 34.5,22.0 33.5,20.0 26.5,20.0" fill="#505050"/><polygon points="24.0,13.0 24.0,21.0 26.0,19.5 26.0,14.0" fill="#505050"/><polygon points="24.0,4.0 24.0,12.0 26.0,11.0 26.0,5.5" fill="#505050"/><polygon points="25.5,12.0 26.5,11.0 33.5,11.0 34.5,12.0 33.5,13.0 26.5,13.0" fill="#505050"/><polygon points="45.5,3.0 54.5,3.0 53.5,5.0 46.5,5.0" fill="#38D8F0"/><polygon points="56.0,4.0 56.0,12.0 54.0,11.0 54.0,5.5" fill="#38D8F0"/><polygon points="56.0,13.0 56.0,21.0 54.0,19.5 54.0,14.0" fill="#38D8F0"/><polygon points="45.5,22.0 54.5,22.0 53.5,20.0 46.5,20.0" fill="#38D8F0"/><polygon points="44.0,13.0 44.0,21.0 46.0,19.5 46.0,14.0" fill="#505050"/><polygon points="44.0,4.0 44.0,12.0 46.0,11.0 46.0,5.5" fill="#38D8F0"/><polygon points="45.5,12.0 46.5,11.0 53.5,11.0 54.5,12.0 53.5,13.0 46.5,13.0" fill="#38D8F0"/><polygon points="65.5,3.0 74.5,3.0 73.5,5.0 66.5,5.0" fill="#505050"/><polygon points="76.0,4.0 76.0,12.0 74.0,11.0 74.0,5.5" fill="#38D8F0"/><polygon points="76.0,13.0 76.0,21.0 74.0,19.5 74.0,14.0" fill="#38D8F0"/><polygon points="65.5,22.0 74.5,22.0 73.5,20.0 66.5,20.0" fill="#505050"/><polygon points="64.0,13.0 64.0,21.0 66.0,19.5 66.0,14.0" fill="#505050"/><polygon points="64.0,4.0 64.0,12.0 66.0,11.0 66.0,5.5" fill="#505050"/><polygon points="65.5,12.0 66.5,11.0 73.5,11.0 74.5,12.0 73.5,13.0 66.5,13.0" fill="#505050"/></svg></div>
<div class="t" style="position:absolute;left:762px;top:194px;white-space:nowrap;font-size:12px;line-height:12px;color:#fff;letter-spacing:0.000px;">&deg;</div>
<div class="t" style="position:absolute;left:768px;top:198px;white-space:nowrap;font-size:12.5px;line-height:12.5px;color:#fff;letter-spacing:0.000px;">C</div>
<div style="left:626px;top:230px;width:158px;height:39px;background:#808080;border-style:solid;border-width:1px;border-color:#fff #C8C4B8 #C8C4B8 #fff"></div>
<div class="t" style="position:absolute;left:634px;top:246px;white-space:nowrap;font-size:12.5px;line-height:12.5px;color:#fff;letter-spacing:-0.200px;">BET</div>
<div style="position:absolute;left:674px;top:238px;width:81px;height:25px;background:#000"><svg width="82" height="25" style="position:absolute;left:0;top:0"><polygon points="5.5,3.0 14.5,3.0 13.5,5.0 6.5,5.0" fill="#505050"/><polygon points="16.0,4.0 16.0,12.0 14.0,11.0 14.0,5.5" fill="#505050"/><polygon points="16.0,13.0 16.0,21.0 14.0,19.5 14.0,14.0" fill="#505050"/><polygon points="5.5,22.0 14.5,22.0 13.5,20.0 6.5,20.0" fill="#505050"/><polygon points="4.0,13.0 4.0,21.0 6.0,19.5 6.0,14.0" fill="#505050"/><polygon points="4.0,4.0 4.0,12.0 6.0,11.0 6.0,5.5" fill="#505050"/><polygon points="5.5,12.0 6.5,11.0 13.5,11.0 14.5,12.0 13.5,13.0 6.5,13.0" fill="#505050"/><polygon points="25.5,3.0 34.5,3.0 33.5,5.0 26.5,5.0" fill="#505050"/><polygon points="36.0,4.0 36.0,12.0 34.0,11.0 34.0,5.5" fill="#38D8F0"/><polygon points="36.0,13.0 36.0,21.0 34.0,19.5 34.0,14.0" fill="#38D8F0"/><polygon points="25.5,22.0 34.5,22.0 33.5,20.0 26.5,20.0" fill="#505050"/><polygon points="24.0,13.0 24.0,21.0 26.0,19.5 26.0,14.0" fill="#505050"/><polygon points="24.0,4.0 24.0,12.0 26.0,11.0 26.0,5.5" fill="#505050"/><polygon points="25.5,12.0 26.5,11.0 33.5,11.0 34.5,12.0 33.5,13.0 26.5,13.0" fill="#505050"/><polygon points="45.5,3.0 54.5,3.0 53.5,5.0 46.5,5.0" fill="#38D8F0"/><polygon points="56.0,4.0 56.0,12.0 54.0,11.0 54.0,5.5" fill="#38D8F0"/><polygon points="56.0,13.0 56.0,21.0 54.0,19.5 54.0,14.0" fill="#38D8F0"/><polygon points="45.5,22.0 54.5,22.0 53.5,20.0 46.5,20.0" fill="#38D8F0"/><polygon points="44.0,13.0 44.0,21.0 46.0,19.5 46.0,14.0" fill="#505050"/><polygon points="44.0,4.0 44.0,12.0 46.0,11.0 46.0,5.5" fill="#505050"/><polygon points="45.5,12.0 46.5,11.0 53.5,11.0 54.5,12.0 53.5,13.0 46.5,13.0" fill="#38D8F0"/><polygon points="65.5,3.0 74.5,3.0 73.5,5.0 66.5,5.0" fill="#38D8F0"/><polygon points="76.0,4.0 76.0,12.0 74.0,11.0 74.0,5.5" fill="#505050"/><polygon points="76.0,13.0 76.0,21.0 74.0,19.5 74.0,14.0" fill="#38D8F0"/><polygon points="65.5,22.0 74.5,22.0 73.5,20.0 66.5,20.0" fill="#38D8F0"/><polygon points="64.0,13.0 64.0,21.0 66.0,19.5 66.0,14.0" fill="#505050"/><polygon points="64.0,4.0 64.0,12.0 66.0,11.0 66.0,5.5" fill="#38D8F0"/><polygon points="65.5,12.0 66.5,11.0 73.5,11.0 74.5,12.0 73.5,13.0 66.5,13.0" fill="#38D8F0"/></svg></div>
<div class="t" style="position:absolute;left:762px;top:242px;white-space:nowrap;font-size:12px;line-height:12px;color:#fff;letter-spacing:0.000px;">&deg;</div>
<div class="t" style="position:absolute;left:768px;top:246px;white-space:nowrap;font-size:12.5px;line-height:12.5px;color:#fff;letter-spacing:0.000px;">C</div>
<div style="left:626px;top:326px;width:158px;height:39px;background:#808080;border-style:solid;border-width:1px;border-color:#fff #C8C4B8 #C8C4B8 #fff"></div>
<div class="t" style="position:absolute;left:634px;top:342px;white-space:nowrap;font-size:12.5px;line-height:12.5px;color:#fff;letter-spacing:-0.200px;">DTC</div>
<div style="position:absolute;left:674px;top:334px;width:81px;height:25px;background:#000"><svg width="82" height="25" style="position:absolute;left:0;top:0"><polygon points="5.5,3.0 14.5,3.0 13.5,5.0 6.5,5.0" fill="#505050"/><polygon points="16.0,4.0 16.0,12.0 14.0,11.0 14.0,5.5" fill="#505050"/><polygon points="16.0,13.0 16.0,21.0 14.0,19.5 14.0,14.0" fill="#505050"/><polygon points="5.5,22.0 14.5,22.0 13.5,20.0 6.5,20.0" fill="#505050"/><polygon points="4.0,13.0 4.0,21.0 6.0,19.5 6.0,14.0" fill="#505050"/><polygon points="4.0,4.0 4.0,12.0 6.0,11.0 6.0,5.5" fill="#505050"/><polygon points="5.5,12.0 6.5,11.0 13.5,11.0 14.5,12.0 13.5,13.0 6.5,13.0" fill="#505050"/><polygon points="25.5,3.0 34.5,3.0 33.5,5.0 26.5,5.0" fill="#505050"/><polygon points="36.0,4.0 36.0,12.0 34.0,11.0 34.0,5.5" fill="#505050"/><polygon points="36.0,13.0 36.0,21.0 34.0,19.5 34.0,14.0" fill="#505050"/><polygon points="25.5,22.0 34.5,22.0 33.5,20.0 26.5,20.0" fill="#505050"/><polygon points="24.0,13.0 24.0,21.0 26.0,19.5 26.0,14.0" fill="#505050"/><polygon points="24.0,4.0 24.0,12.0 26.0,11.0 26.0,5.5" fill="#505050"/><polygon points="25.5,12.0 26.5,11.0 33.5,11.0 34.5,12.0 33.5,13.0 26.5,13.0" fill="#505050"/><polygon points="45.5,3.0 54.5,3.0 53.5,5.0 46.5,5.0" fill="#505050"/><polygon points="56.0,4.0 56.0,12.0 54.0,11.0 54.0,5.5" fill="#505050"/><polygon points="56.0,13.0 56.0,21.0 54.0,19.5 54.0,14.0" fill="#505050"/><polygon points="45.5,22.0 54.5,22.0 53.5,20.0 46.5,20.0" fill="#505050"/><polygon points="44.0,13.0 44.0,21.0 46.0,19.5 46.0,14.0" fill="#505050"/><polygon points="44.0,4.0 44.0,12.0 46.0,11.0 46.0,5.5" fill="#505050"/><polygon points="45.5,12.0 46.5,11.0 53.5,11.0 54.5,12.0 53.5,13.0 46.5,13.0" fill="#505050"/><polygon points="65.5,3.0 74.5,3.0 73.5,5.0 66.5,5.0" fill="#FF2424"/><polygon points="76.0,4.0 76.0,12.0 74.0,11.0 74.0,5.5" fill="#FF2424"/><polygon points="76.0,13.0 76.0,21.0 74.0,19.5 74.0,14.0" fill="#FF2424"/><polygon points="65.5,22.0 74.5,22.0 73.5,20.0 66.5,20.0" fill="#FF2424"/><polygon points="64.0,13.0 64.0,21.0 66.0,19.5 66.0,14.0" fill="#FF2424"/><polygon points="64.0,4.0 64.0,12.0 66.0,11.0 66.0,5.5" fill="#FF2424"/><polygon points="65.5,12.0 66.5,11.0 73.5,11.0 74.5,12.0 73.5,13.0 66.5,13.0" fill="#505050"/></svg></div>
<div style="position:absolute;left:230px;top:392px;width:545px;height:1px;background:#D8E0E8"></div>
<div style="position:absolute;left:230px;top:393px;width:545px;height:53px;background:#3169C6"></div>
<div style="position:absolute;left:230px;top:393px;width:545px;height:1px;background:#3C5A8C"></div>
<div style="position:absolute;left:230px;top:394px;width:545px;height:1px;background:#E0F4FF"></div>
<div style="position:absolute;left:230px;top:395px;width:545px;height:1px;background:#2C5FB4"></div>
<div style="position:absolute;left:230px;top:444px;width:545px;height:1px;background:#8FB0E8"></div>
<div style="position:absolute;left:230px;top:445px;width:545px;height:1px;background:#3A4A7A"></div>
<div style="position:absolute;left:230px;top:446px;width:545px;height:1px;background:#FFFFFF"></div>
<div style="position:absolute;left:268px;top:398px;width:81px;height:41px;background:#ECE9D8"></div>
<div style="position:absolute;left:268px;top:398px;width:79px;height:39px;border:1px solid #000"></div>
<div style="position:absolute;left:269px;top:399px;width:77px;height:37px;border-style:solid;border-width:1px;border-color:#FFFFFF #716F64 #716F64 #FFFFFF"></div>
<div style="position:absolute;left:270px;top:400px;width:75px;height:35px;border-style:solid;border-width:1px;border-color:#F1EFE2 #ACA899 #ACA899 #F1EFE2"></div>
<div style="left:272px;top:402px;width:71px;height:31px;border:1px dotted #000"></div>
<div class="t" style="position:absolute;left:279px;top:413px;white-space:nowrap;font-size:12px;line-height:12px;color:#000;letter-spacing:0.750px;font-weight:bold;font-style:italic;">Live data</div>
<div style="position:absolute;left:364px;top:398px;width:81px;height:41px;background:#ECE9D8"></div>
<div style="position:absolute;left:364px;top:398px;width:79px;height:39px;border-style:solid;border-width:1px;border-color:#FFFFFF #716F64 #716F64 #FFFFFF"></div>
<div style="position:absolute;left:365px;top:399px;width:77px;height:37px;border-style:solid;border-width:1px;border-color:#F1EFE2 #ACA899 #ACA899 #F1EFE2"></div>
<div class="t" style="position:absolute;left:374px;top:413px;white-space:nowrap;font-size:12px;line-height:12px;color:#000;letter-spacing:0.364px;font-weight:bold;font-style:italic;">Read DTC</div>
<div style="position:absolute;left:460px;top:398px;width:81px;height:41px;background:#ECE9D8"></div>
<div style="position:absolute;left:460px;top:398px;width:79px;height:39px;border-style:solid;border-width:1px;border-color:#FFFFFF #716F64 #716F64 #FFFFFF"></div>
<div style="position:absolute;left:461px;top:399px;width:77px;height:37px;border-style:solid;border-width:1px;border-color:#F1EFE2 #ACA899 #ACA899 #F1EFE2"></div>
<div class="t" style="position:absolute;left:469px;top:413px;white-space:nowrap;font-size:12px;line-height:12px;color:#000;letter-spacing:0.381px;font-weight:bold;font-style:italic;">Clear DTC</div>
<div style="position:absolute;left:556px;top:398px;width:97px;height:41px;background:#ECE9D8"></div>
<div style="position:absolute;left:556px;top:398px;width:95px;height:39px;border-style:solid;border-width:1px;border-color:#FFFFFF #716F64 #716F64 #FFFFFF"></div>
<div style="position:absolute;left:557px;top:399px;width:93px;height:37px;border-style:solid;border-width:1px;border-color:#F1EFE2 #ACA899 #ACA899 #F1EFE2"></div>
<div class="t" style="position:absolute;left:559px;top:413px;white-space:nowrap;font-size:12px;line-height:12px;color:#A5A293;letter-spacing:1.058px;font-weight:bold;font-style:italic;text-shadow:1px 1px 0 #fff">Read Injector</div>
<div style="position:absolute;left:660px;top:398px;width:97px;height:41px;background:#ECE9D8"></div>
<div style="position:absolute;left:660px;top:398px;width:95px;height:39px;border-style:solid;border-width:1px;border-color:#FFFFFF #716F64 #716F64 #FFFFFF"></div>
<div style="position:absolute;left:661px;top:399px;width:93px;height:37px;border-style:solid;border-width:1px;border-color:#F1EFE2 #ACA899 #ACA899 #F1EFE2"></div>
<div class="t" style="position:absolute;left:665px;top:413px;white-space:nowrap;font-size:12px;line-height:12px;color:#A5A293;letter-spacing:1.008px;font-weight:bold;font-style:italic;text-shadow:1px 1px 0 #fff">Prog Injector</div>
<div style="position:absolute;left:148px;top:454px;width:81px;height:41px;background:#ECE9D8"></div>
<div style="position:absolute;left:148px;top:454px;width:79px;height:39px;border-style:solid;border-width:1px;border-color:#FFFFFF #716F64 #716F64 #FFFFFF"></div>
<div style="position:absolute;left:149px;top:455px;width:77px;height:37px;border-style:solid;border-width:1px;border-color:#F1EFE2 #ACA899 #ACA899 #F1EFE2"></div>
<div class="t" style="position:absolute;left:186px;top:469px;white-space:nowrap;font-size:13px;line-height:13px;color:#000;letter-spacing:0.017px;">back</div>
<svg width="18" height="18" style="left:164px;top:467px" viewBox="0 0 18 18"><g id="arr"><path d="M1.6 6.2 Q2 1.2 8.5 1.2 Q11.5 1.2 13 2.2" fill="none" stroke="#003A00" stroke-width="3.6"/><path d="M1.6 6.2 Q2 1.2 8.5 1.2 Q11.5 1.2 13 2.2" fill="none" stroke="#22B022" stroke-width="2.2"/><path d="M10.5 7.6 L17 7.6 L17 1.2 Z" fill="#149014" stroke="#003A00" stroke-width="1"/></g><use href="#arr" transform="rotate(180 8.7 8.6)"/></svg>
<div style="position:absolute;left:148px;top:510px;width:81px;height:41px;background:#ECE9D8"></div>
<div style="position:absolute;left:148px;top:510px;width:79px;height:39px;border-style:solid;border-width:1px;border-color:#FFFFFF #716F64 #716F64 #FFFFFF"></div>
<div style="position:absolute;left:149px;top:511px;width:77px;height:37px;border-style:solid;border-width:1px;border-color:#F1EFE2 #ACA899 #ACA899 #F1EFE2"></div>
<div class="t" style="position:absolute;left:189px;top:525px;white-space:nowrap;font-size:13px;line-height:13px;color:#000;letter-spacing:0.583px;">exit</div>
<svg width="20" height="20" style="left:165px;top:521px"><rect x="7.5" y="1.5" width="5" height="2.5" fill="#7CC77C" stroke="#102810" stroke-width="1"/><rect x="5.5" y="6.5" width="3.5" height="11" fill="#A020C8"/><rect x="9" y="6.5" width="3.5" height="11" fill="#C8F0FF"/><path d="M1 17.5 L5.5 17.5 L5.5 6 L13 6 L13 17.5 L19 17.5" fill="none" stroke="#101010" stroke-width="1.1"/></svg>
<div style="position:absolute;left:260px;top:454px;width:385px;height:101px;background:#808080"></div>
<div style="position:absolute;left:292px;top:470px;width:321px;height:68px;background:#000"></div>
<svg width="60" height="16" style="position:absolute;left:323px;top:505px"><rect x="0" y="0" width="1.3" height="1.3" fill="#5aa05a"/><rect x="2" y="0" width="1.3" height="1.3" fill="#5aa05a"/><rect x="4" y="0" width="1.3" height="1.3" fill="#5aa05a"/><rect x="6" y="0" width="1.3" height="1.3" fill="#5aa05a"/><rect x="0" y="2" width="1.3" height="1.3" fill="#5aa05a"/><rect x="8" y="2" width="1.3" height="1.3" fill="#5aa05a"/><rect x="0" y="4" width="1.3" height="1.3" fill="#5aa05a"/><rect x="8" y="4" width="1.3" height="1.3" fill="#5aa05a"/><rect x="0" y="6" width="1.3" height="1.3" fill="#5aa05a"/><rect x="2" y="6" width="1.3" height="1.3" fill="#5aa05a"/><rect x="4" y="6" width="1.3" height="1.3" fill="#5aa05a"/><rect x="6" y="6" width="1.3" height="1.3" fill="#5aa05a"/><rect x="0" y="8" width="1.3" height="1.3" fill="#5aa05a"/><rect x="0" y="10" width="1.3" height="1.3" fill="#5aa05a"/><rect x="0" y="12" width="1.3" height="1.3" fill="#5aa05a"/><rect x="15" y="0" width="1.3" height="1.3" fill="#5aa05a"/><rect x="17" y="0" width="1.3" height="1.3" fill="#5aa05a"/><rect x="19" y="0" width="1.3" height="1.3" fill="#5aa05a"/><rect x="13" y="2" width="1.3" height="1.3" fill="#5aa05a"/><rect x="21" y="2" width="1.3" height="1.3" fill="#5aa05a"/><rect x="13" y="4" width="1.3" height="1.3" fill="#5aa05a"/><rect x="13" y="6" width="1.3" height="1.3" fill="#5aa05a"/><rect x="13" y="8" width="1.3" height="1.3" fill="#5aa05a"/><rect x="13" y="10" width="1.3" height="1.3" fill="#5aa05a"/><rect x="21" y="10" width="1.3" height="1.3" fill="#5aa05a"/><rect x="15" y="12" width="1.3" height="1.3" fill="#5aa05a"/><rect x="17" y="12" width="1.3" height="1.3" fill="#5aa05a"/><rect x="19" y="12" width="1.3" height="1.3" fill="#5aa05a"/><rect x="26" y="0" width="1.3" height="1.3" fill="#5aa05a"/><rect x="34" y="0" width="1.3" height="1.3" fill="#5aa05a"/><rect x="26" y="2" width="1.3" height="1.3" fill="#5aa05a"/><rect x="28" y="2" width="1.3" height="1.3" fill="#5aa05a"/><rect x="32" y="2" width="1.3" height="1.3" fill="#5aa05a"/><rect x="34" y="2" width="1.3" height="1.3" fill="#5aa05a"/><rect x="26" y="4" width="1.3" height="1.3" fill="#5aa05a"/><rect x="30" y="4" width="1.3" height="1.3" fill="#5aa05a"/><rect x="34" y="4" width="1.3" height="1.3" fill="#5aa05a"/><rect x="26" y="6" width="1.3" height="1.3" fill="#5aa05a"/><rect x="30" y="6" width="1.3" height="1.3" fill="#5aa05a"/><rect x="34" y="6" width="1.3" height="1.3" fill="#5aa05a"/><rect x="26" y="8" width="1.3" height="1.3" fill="#5aa05a"/><rect x="34" y="8" width="1.3" height="1.3" fill="#5aa05a"/><rect x="26" y="10" width="1.3" height="1.3" fill="#5aa05a"/><rect x="34" y="10" width="1.3" height="1.3" fill="#5aa05a"/><rect x="26" y="12" width="1.3" height="1.3" fill="#5aa05a"/><rect x="34" y="12" width="1.3" height="1.3" fill="#5aa05a"/></svg>
<div style="position:absolute;left:676px;top:454px;width:81px;height:41px;background:#ECE9D8"></div>
<div style="position:absolute;left:676px;top:454px;width:79px;height:39px;border-style:solid;border-width:1px;border-color:#FFFFFF #716F64 #716F64 #FFFFFF"></div>
<div style="position:absolute;left:677px;top:455px;width:77px;height:37px;border-style:solid;border-width:1px;border-color:#F1EFE2 #ACA899 #ACA899 #F1EFE2"></div>
<div class="t" style="position:absolute;left:720px;top:470px;white-space:nowrap;font-size:12px;line-height:12px;color:#A5A293;letter-spacing:-1.350px;">OK</div>
<svg width="18" height="16" style="left:697px;top:467px"><path d="M1.5 9 L3.5 7 L6.5 10 L14.5 1.5 L16.5 3.5 L6.5 14 Z" fill="none" stroke="#8E8B7C" stroke-width="1"/></svg>
<div style="position:absolute;left:676px;top:510px;width:81px;height:41px;background:#ECE9D8"></div>
<div style="position:absolute;left:676px;top:510px;width:79px;height:39px;border-style:solid;border-width:1px;border-color:#FFFFFF #716F64 #716F64 #FFFFFF"></div>
<div style="position:absolute;left:677px;top:511px;width:77px;height:37px;border-style:solid;border-width:1px;border-color:#F1EFE2 #ACA899 #ACA899 #F1EFE2"></div>
<div class="t" style="position:absolute;left:709px;top:525px;white-space:nowrap;font-size:13px;line-height:13px;color:#A5A293;letter-spacing:-0.060px;">cancel</div>
<svg width="16" height="16" style="left:689px;top:522px"><path d="M3 1 L8 6 L13 1 L15 3 L10 8 L15 13 L13 15 L8 10 L3 15 L1 13 L6 8 L1 3 Z" fill="none" stroke="#8E8B7C" stroke-width="1" stroke-linejoin="round"/></svg>
<div style="position:absolute;left:4px;top:556px;width:788px;height:21px;background:#C0C0C0"></div>
<div style="position:absolute;left:4px;top:556px;width:788px;height:1px;background:#D4D2CA"></div>
<div style="position:absolute;left:4px;top:558px;width:788px;height:1px;background:#AAA89C"></div>
<div style="position:absolute;left:4px;top:576px;width:788px;height:1px;background:#F2FAFF"></div>
<div style="position:absolute;left:776px;top:559px;width:15px;height:17px;background:#ECE9D8"></div>
<svg width="16" height="16" style="left:776px;top:560px"><g stroke-width="1.2"><path d="M15 4 L5 15 M15 9 L9 15" stroke="#9C9886"/><path d="M15.5 5 L6 15.5 M15.5 10 L10 15.5" stroke="#FFFFFF"/></g></svg>
</body></html>
